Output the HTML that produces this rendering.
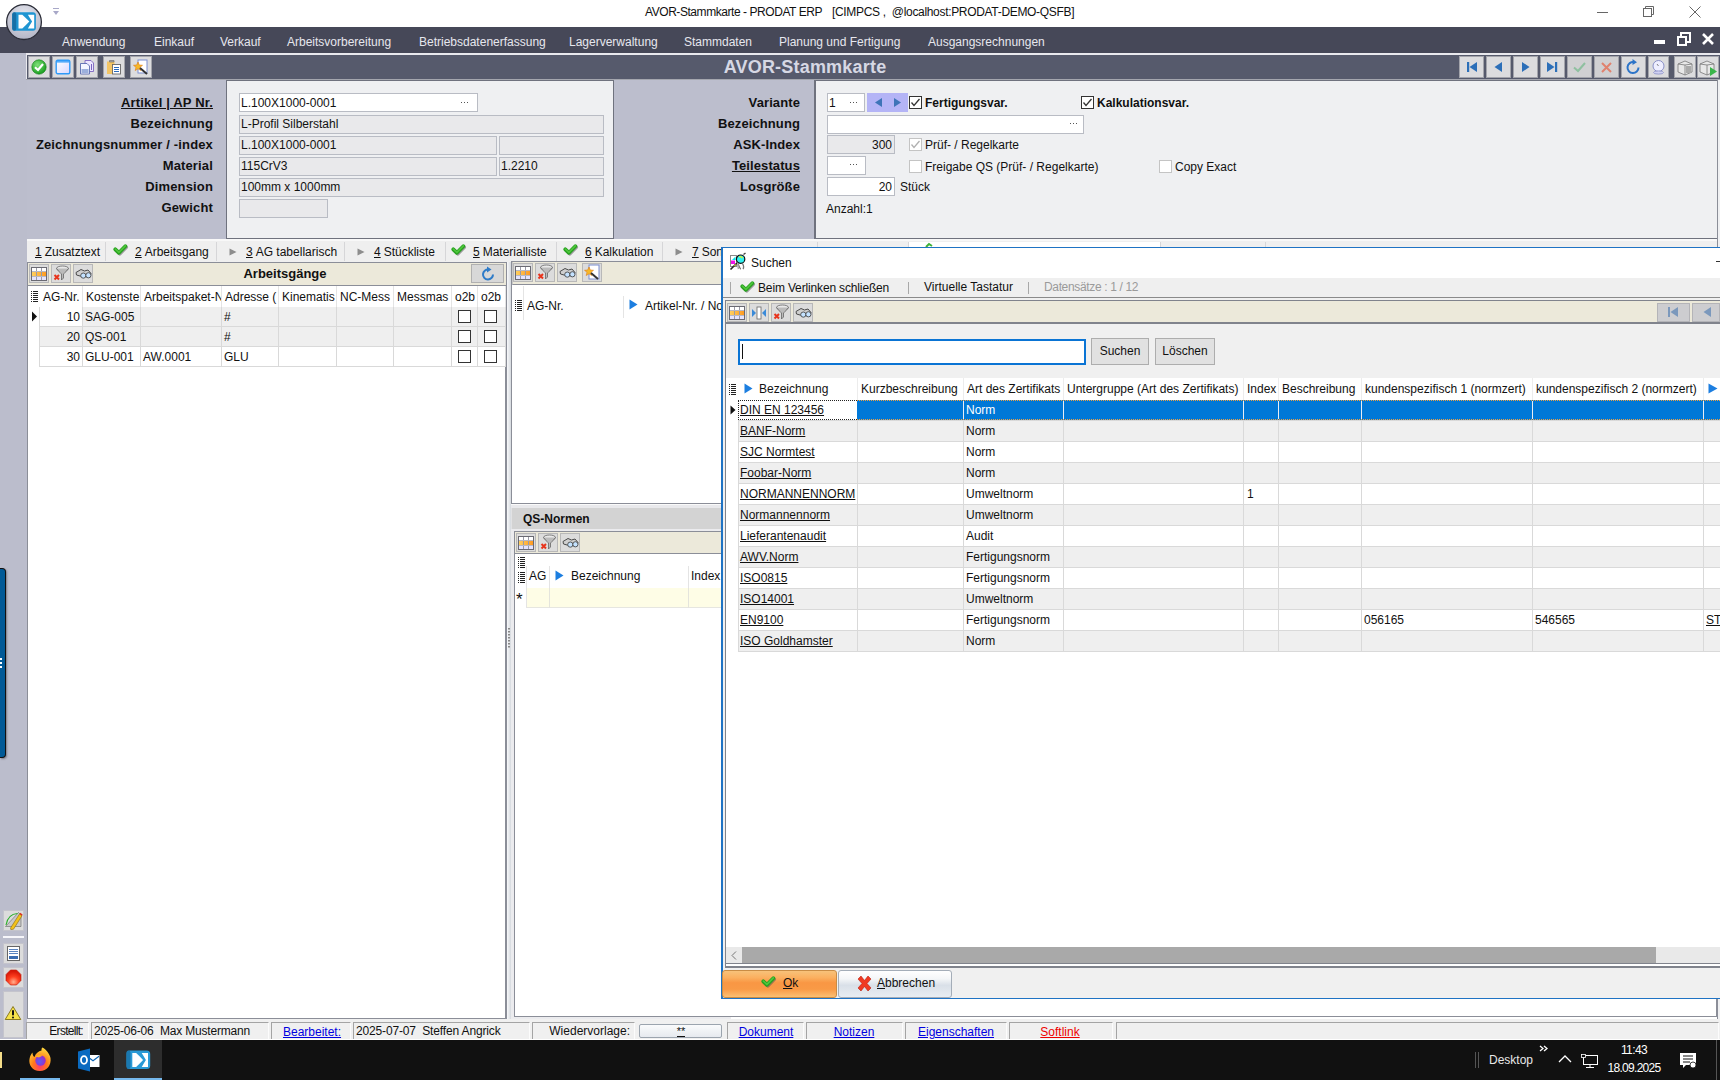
<!DOCTYPE html><html><head><meta charset="utf-8"><title>AVOR-Stammkarte</title><style>
html,body{margin:0;padding:0;width:1720px;height:1080px;overflow:hidden;background:#fff;font-family:"Liberation Sans",sans-serif;}
.a{position:absolute;box-sizing:border-box;}
.t{white-space:nowrap;}
.u{text-decoration:underline;}
</style></head><body>
<div class="a" style="left:0px;top:0px;width:1720px;height:27px;background:#fff"></div>
<svg class="a" style="left:52px;top:8px;" width="8" height="8" viewBox="0 0 8 8"><rect x="1" y="0" width="6" height="1" fill="#a8a8c8"/><path d="M1 3 L7 3 L4 7Z" fill="#a8a8c8"/></svg>
<div class="a t" style="left:645px;top:5px;font-size:12px;line-height:14px;color:#111;letter-spacing:-0.44px">AVOR-Stammkarte - PRODAT ERP</div>
<div class="a t" style="left:832px;top:5px;font-size:12px;line-height:14px;color:#111;letter-spacing:-0.32px">[CIMPCS ,&nbsp; @localhost:PRODAT-DEMO-QSFB]</div>
<div class="a" style="left:1597px;top:12px;width:11px;height:1px;background:#666"></div>
<svg class="a" style="left:1643px;top:6px;" width="12" height="12" viewBox="0 0 12 12"><rect x="0.5" y="2.5" width="8" height="8" fill="none" stroke="#666"/><path d="M2.5 2.5 V0.5 H10.5 V8.5 H8.5" fill="none" stroke="#666"/></svg>
<svg class="a" style="left:1688px;top:5px;" width="14" height="14" viewBox="0 0 14 14"><path d="M1.5 1.5 L12.5 12.5 M12.5 1.5 L1.5 12.5" stroke="#555" stroke-width="0.9"/></svg>
<div class="a" style="left:0px;top:27px;width:1720px;height:26px;background:#464858"></div>
<div class="a t" style="left:62px;top:35px;font-size:12px;line-height:14px;color:#e6e7ee;">Anwendung</div>
<div class="a t" style="left:154px;top:35px;font-size:12px;line-height:14px;color:#e6e7ee;">Einkauf</div>
<div class="a t" style="left:220px;top:35px;font-size:12px;line-height:14px;color:#e6e7ee;">Verkauf</div>
<div class="a t" style="left:287px;top:35px;font-size:12px;line-height:14px;color:#e6e7ee;">Arbeitsvorbereitung</div>
<div class="a t" style="left:419px;top:35px;font-size:12px;line-height:14px;color:#e6e7ee;">Betriebsdatenerfassung</div>
<div class="a t" style="left:569px;top:35px;font-size:12px;line-height:14px;color:#e6e7ee;">Lagerverwaltung</div>
<div class="a t" style="left:684px;top:35px;font-size:12px;line-height:14px;color:#e6e7ee;">Stammdaten</div>
<div class="a t" style="left:779px;top:35px;font-size:12px;line-height:14px;color:#e6e7ee;">Planung und Fertigung</div>
<div class="a t" style="left:928px;top:35px;font-size:12px;line-height:14px;color:#e6e7ee;">Ausgangsrechnungen</div>
<svg class="a" style="left:4px;top:3px;" width="40" height="40" viewBox="0 0 40 40"><defs><radialGradient id="lg" cx="50%" cy="30%" r="70%"><stop offset="0" stop-color="#e6e7ef"/><stop offset="1" stop-color="#b4b6c6"/></radialGradient></defs>
<circle cx="20" cy="19.1" r="17.4" fill="url(#lg)" stroke="#2b2d38" stroke-width="1.3"/>
<rect x="8.2" y="9.2" width="23.7" height="18.5" rx="3" fill="#1f95d2"/>
<rect x="8.2" y="9.2" width="4" height="18.5" rx="2" fill="#176fa6"/>
<path d="M14.5 11.7 L18.3 11.7 Q22 15 25.3 18.6 Q22 22.2 18.3 25.6 L14.5 25.6Z" fill="#fff"/>
<path d="M23.9 11.7 L30.2 11.7 L30.2 25.6 L23.9 25.6 Q26 22 28.1 18.6 Q26 15.2 23.9 11.7Z" fill="#fff"/></svg>
<div class="a" style="left:1654px;top:40px;width:11px;height:4px;background:#fff"></div>
<svg class="a" style="left:1677px;top:32px;" width="14" height="14" viewBox="0 0 14 14"><rect x="1" y="5" width="8" height="8" fill="none" stroke="#fff" stroke-width="2"/><path d="M4 4 V1 H13 V10 H10" fill="none" stroke="#fff" stroke-width="2"/></svg>
<svg class="a" style="left:1701px;top:32px;" width="14" height="14" viewBox="0 0 14 14"><path d="M2 2 L12 12 M12 2 L2 12" stroke="#fff" stroke-width="2.6"/></svg>
<div class="a" style="left:0px;top:53px;width:27px;height:987px;background:#bbbdcc"></div>
<div class="a" style="left:26px;top:53px;width:1694px;height:2px;background:#e9e9ee"></div>
<div class="a" style="left:26px;top:55px;width:1694px;height:25px;background:#565a6c;border-left:1px solid #e9e9ee"></div>
<div class="a" style="left:26px;top:79px;width:1694px;height:1px;background:#a4a6ae"></div>
<div class="a" style="left:28px;top:56px;width:22px;height:22px;background:#dcdcde;border:1px solid #a3a4ab"></div>
<div class="a" style="left:52px;top:56px;width:22px;height:22px;background:#dcdcde;border:1px solid #a3a4ab"></div>
<div class="a" style="left:76px;top:56px;width:22px;height:22px;background:#dcdcde;border:1px solid #a3a4ab"></div>
<div class="a" style="left:103px;top:56px;width:22px;height:22px;background:#dcdcde;border:1px solid #a3a4ab"></div>
<div class="a" style="left:130px;top:56px;width:22px;height:22px;background:#dcdcde;border:1px solid #a3a4ab"></div>
<svg class="a" style="left:31px;top:59px;" width="16" height="16" viewBox="0 0 16 16"><defs><radialGradient id="gc" cx="40%" cy="35%" r="70%"><stop offset="0" stop-color="#7fe07a"/><stop offset="1" stop-color="#139a1a"/></radialGradient></defs><circle cx="8" cy="8" r="7.2" fill="url(#gc)" stroke="#0b7a12" stroke-width="0.6"/><path d="M4 8.3 L7 11 L12 5" fill="none" stroke="#fff" stroke-width="2.2"/></svg>
<svg class="a" style="left:55px;top:59px;" width="16" height="16" viewBox="0 0 16 16"><defs><linearGradient id="wg" x1="0" y1="0" x2="1" y2="1"><stop offset="0" stop-color="#fff"/><stop offset="1" stop-color="#d8d8ff"/></linearGradient></defs><rect x="1.2" y="1.2" width="13.6" height="13.6" rx="1.5" fill="url(#wg)" stroke="#2e9af8" stroke-width="1.4"/><rect x="2" y="2.2" width="12" height="1.3" fill="#2e9af8"/></svg>
<svg class="a" style="left:79px;top:59px;" width="16" height="16" viewBox="0 0 16 16"><path d="M6 1.5 H12 L14.5 4 V12.5 H6Z" fill="#ece6ff" stroke="#7a64c0" stroke-width="0.9"/><rect x="12" y="5" width="1" height="6" fill="#7a64c0"/><path d="M1.5 4.5 H8 L10.5 7 V15 H1.5Z" fill="#f4f6ff" stroke="#5a6cb0" stroke-width="0.9"/><rect x="2.5" y="10" width="7" height="4" fill="#9cb0dc"/></svg>
<svg class="a" style="left:106px;top:59px;" width="16" height="16" viewBox="0 0 16 16"><rect x="1" y="2.5" width="7.5" height="12.5" fill="#f3c565"/><path d="M3.5 3 V1.5 H8 V3Z" fill="#aaa" stroke="#666" stroke-width="0.6"/><rect x="6.5" y="5.5" width="8" height="9.5" fill="#fff" stroke="#666" stroke-width="0.9"/><rect x="8" y="8" width="5" height="1" fill="#2a6bbd"/><rect x="8" y="10" width="5" height="1" fill="#2a6bbd"/><rect x="8" y="12" width="5" height="1" fill="#2a6bbd"/></svg>
<svg class="a" style="left:133px;top:59px;" width="16" height="16" viewBox="0 0 16 16"><rect x="5" y="1" width="9" height="13" fill="#fff" stroke="#7b8ed0" stroke-width="1"/><path d="M5 3 L6.3 6 L9.5 6.3 L7 8.3 L7.8 11.5 L5 9.8 L2.2 11.5 L3 8.3 L0.5 6.3 L3.7 6Z" fill="#f6b928" stroke="#e07a10" stroke-width="0.6"/><path d="M7 9 L14 15" stroke="#333" stroke-width="2"/></svg>
<div class="a t" style="left:505px;width:600px;top:57px;font-size:18px;line-height:20px;font-weight:bold;color:#d6d8e4;text-align:center;letter-spacing:0.2px">AVOR-Stammkarte</div>
<div class="a" style="left:1459px;top:56px;width:25px;height:22px;background:#dcdcde;border:1px solid #a3a4ab"></div>
<div class="a" style="left:1486px;top:56px;width:25px;height:22px;background:#dcdcde;border:1px solid #a3a4ab"></div>
<div class="a" style="left:1513px;top:56px;width:25px;height:22px;background:#dcdcde;border:1px solid #a3a4ab"></div>
<div class="a" style="left:1540px;top:56px;width:25px;height:22px;background:#dcdcde;border:1px solid #a3a4ab"></div>
<div class="a" style="left:1567px;top:56px;width:25px;height:22px;background:#d0d0d2;border:1px solid #a3a4ab"></div>
<div class="a" style="left:1594px;top:56px;width:25px;height:22px;background:#d0d0d2;border:1px solid #a3a4ab"></div>
<div class="a" style="left:1621px;top:56px;width:25px;height:22px;background:#dcdcde;border:1px solid #a3a4ab"></div>
<div class="a" style="left:1648px;top:56px;width:21px;height:22px;background:#dcdcde;border:1px solid #a3a4ab"></div>
<div class="a" style="left:1674px;top:56px;width:22px;height:22px;background:#dcdcde;border:1px solid #a3a4ab"></div>
<div class="a" style="left:1697px;top:56px;width:22px;height:22px;background:#dcdcde;border:1px solid #a3a4ab"></div>
<svg class="a" style="left:1459px;top:56px;" width="25" height="22" viewBox="0 0 25 22"><rect x="8" y="6" width="2.2" height="10" fill="#2c6fb8"/><path d="M18 6 L10.5 11 L18 16Z" fill="#2c6fb8"/></svg>
<svg class="a" style="left:1486px;top:56px;" width="25" height="22" viewBox="0 0 25 22"><path d="M16 6 L8.5 11 L16 16Z" fill="#2c6fb8"/></svg>
<svg class="a" style="left:1513px;top:56px;" width="25" height="22" viewBox="0 0 25 22"><path d="M9 6 L16.5 11 L9 16Z" fill="#2c6fb8"/></svg>
<svg class="a" style="left:1540px;top:56px;" width="25" height="22" viewBox="0 0 25 22"><rect x="15" y="6" width="2.2" height="10" fill="#2c6fb8"/><path d="M7 6 L14.5 11 L7 16Z" fill="#2c6fb8"/></svg>
<svg class="a" style="left:1567px;top:56px;" width="25" height="22" viewBox="0 0 25 22"><path d="M7 11.5 L11 15 L18 7" fill="none" stroke="#8fc0a0" stroke-width="2"/></svg>
<svg class="a" style="left:1594px;top:56px;" width="25" height="22" viewBox="0 0 25 22"><path d="M8 7 L17 16 M17 7 L8 16" stroke="#e0826e" stroke-width="2"/></svg>
<svg class="a" style="left:1621px;top:56px;" width="25" height="22" viewBox="0 0 25 22"><path d="M17.5 11.5 A5.5 5.5 0 1 1 13 6.1" fill="none" stroke="#2c74c8" stroke-width="2"/><path d="M11.5 3 L16 6.3 L11.5 9Z" fill="#2c74c8"/></svg>
<svg class="a" style="left:1646px;top:56px;" width="25" height="22" viewBox="0 0 25 22"><circle cx="12.5" cy="10" r="5.5" fill="#eef" stroke="#8a90c8" stroke-width="1"/><ellipse cx="12.5" cy="16.5" rx="5" ry="1.6" fill="#cfd0f0" stroke="#8a90c8" stroke-width="0.8"/><path d="M12.5 10 L11 8" stroke="#666" stroke-width="0.8"/></svg>
<svg class="a" style="left:1674px;top:56px;" width="22" height="22" viewBox="0 0 22 22"><path d="M4 8 L11 5 L18 8 L18 16 L11 19 L4 16Z" fill="#e8e8e8" stroke="#777" stroke-width="0.8"/><path d="M11 9 L11 19 M4 8 L11 9 L18 8" stroke="#777" stroke-width="0.8" fill="none"/><rect x="12" y="10" width="5" height="7" fill="#aaa"/></svg>
<svg class="a" style="left:1697px;top:56px;" width="22" height="22" viewBox="0 0 22 22"><path d="M3 8 L10 5 L17 8 L17 16 L10 19 L3 16Z" fill="#e8e8e8" stroke="#777" stroke-width="0.8"/><path d="M10 9 L10 19 M3 8 L10 9 L17 8" stroke="#777" stroke-width="0.8" fill="none"/><path d="M13 11 L20 15.5 L13 20Z" fill="#39b54a"/></svg>
<div class="a" style="left:27px;top:80px;width:1693px;height:159px;background:#bcbecd"></div>
<div class="a" style="left:226px;top:80px;width:388px;height:159px;background:#eff0f2;border:1px solid #6f727e;border-bottom:1px solid #6f727e"></div>
<div class="a" style="left:814px;top:80px;width:906px;height:159px;background:#eff0f2;border-left:2px solid #6f727e;border-top:1px solid #6f727e;border-bottom:1px solid #6f727e"></div>
<div class="a t" style="right:1507px;top:95px;font-size:13px;line-height:15px;font-weight:bold;color:#111;text-align:right;text-decoration:underline;letter-spacing:0.15px">Artikel | AP Nr.</div>
<div class="a t" style="right:1507px;top:116px;font-size:13px;line-height:15px;font-weight:bold;color:#111;text-align:right;letter-spacing:0.15px">Bezeichnung</div>
<div class="a t" style="right:1507px;top:137px;font-size:13px;line-height:15px;font-weight:bold;color:#111;text-align:right;letter-spacing:0.15px">Zeichnungsnummer / -index</div>
<div class="a t" style="right:1507px;top:158px;font-size:13px;line-height:15px;font-weight:bold;color:#111;text-align:right;letter-spacing:0.15px">Material</div>
<div class="a t" style="right:1507px;top:179px;font-size:13px;line-height:15px;font-weight:bold;color:#111;text-align:right;letter-spacing:0.15px">Dimension</div>
<div class="a t" style="right:1507px;top:200px;font-size:13px;line-height:15px;font-weight:bold;color:#111;text-align:right;letter-spacing:0.15px">Gewicht</div>
<div class="a" style="left:239px;top:93px;width:239px;height:19px;background:#fff;border:1px solid #b9bcc4"></div>
<div class="a t" style="left:241px;top:96px;font-size:12px;line-height:14px;color:#111;">L.100X1000-0001</div>
<svg class="a" style="left:461px;top:101px;" width="10" height="3" viewBox="0 0 10 3"><rect x="0" y="1" width="1" height="1" fill="#555"/><rect x="3" y="1" width="1" height="1" fill="#555"/><rect x="6" y="1" width="1" height="1" fill="#555"/></svg>
<div class="a" style="left:239px;top:115px;width:365px;height:19px;background:#e9e9eb;border:1px solid #b9bcc4"></div>
<div class="a t" style="left:241px;top:117px;font-size:12px;line-height:14px;color:#111;">L-Profil Silberstahl</div>
<div class="a" style="left:239px;top:136px;width:258px;height:19px;background:#e9e9eb;border:1px solid #b9bcc4"></div>
<div class="a" style="left:499px;top:136px;width:105px;height:19px;background:#e9e9eb;border:1px solid #b9bcc4"></div>
<div class="a t" style="left:241px;top:138px;font-size:12px;line-height:14px;color:#111;">L.100X1000-0001</div>
<div class="a" style="left:239px;top:157px;width:258px;height:19px;background:#e9e9eb;border:1px solid #b9bcc4"></div>
<div class="a" style="left:499px;top:157px;width:105px;height:19px;background:#e9e9eb;border:1px solid #b9bcc4"></div>
<div class="a t" style="left:241px;top:159px;font-size:12px;line-height:14px;color:#111;">115CrV3</div>
<div class="a t" style="left:501px;top:159px;font-size:12px;line-height:14px;color:#111;">1.2210</div>
<div class="a" style="left:239px;top:178px;width:365px;height:19px;background:#e9e9eb;border:1px solid #b9bcc4"></div>
<div class="a t" style="left:241px;top:180px;font-size:12px;line-height:14px;color:#111;">100mm x 1000mm</div>
<div class="a" style="left:239px;top:199px;width:89px;height:19px;background:#e9e9eb;border:1px solid #b9bcc4"></div>
<div class="a t" style="right:920px;top:95px;font-size:13px;line-height:15px;font-weight:bold;color:#111;text-align:right;letter-spacing:0.1px">Variante</div>
<div class="a t" style="right:920px;top:116px;font-size:13px;line-height:15px;font-weight:bold;color:#111;text-align:right;letter-spacing:0.1px">Bezeichnung</div>
<div class="a t" style="right:920px;top:137px;font-size:13px;line-height:15px;font-weight:bold;color:#111;text-align:right;letter-spacing:0.1px">ASK-Index</div>
<div class="a t" style="right:920px;top:158px;font-size:13px;line-height:15px;font-weight:bold;color:#111;text-align:right;text-decoration:underline;letter-spacing:0.1px">Teilestatus</div>
<div class="a t" style="right:920px;top:179px;font-size:13px;line-height:15px;font-weight:bold;color:#111;text-align:right;letter-spacing:0.1px">Losgröße</div>
<div class="a" style="left:827px;top:93px;width:38px;height:19px;background:#fff;border:1px solid #b9bcc4"></div>
<div class="a t" style="left:829px;top:96px;font-size:12px;line-height:14px;color:#111;">1</div>
<svg class="a" style="left:850px;top:101px;" width="10" height="3" viewBox="0 0 10 3"><rect x="0" y="1" width="1" height="1" fill="#555"/><rect x="3" y="1" width="1" height="1" fill="#555"/><rect x="6" y="1" width="1" height="1" fill="#555"/></svg>
<div class="a" style="left:867px;top:93px;width:41px;height:19px;background:#b4b4f6"></div>
<svg class="a" style="left:867px;top:93px;" width="41" height="19" viewBox="0 0 41 19"><path d="M15 5 L8 9.5 L15 14Z" fill="#3e74b8"/><path d="M27 5 L34 9.5 L27 14Z" fill="#3e74b8"/></svg>
<svg class="a" style="left:909px;top:96px;" width="13" height="13" viewBox="0 0 13 13"><rect x="0.5" y="0.5" width="12" height="12" fill="#fff" stroke="#333"/><path d="M2.5 6.5 L5 9.5 L10.5 3" fill="none" stroke="#333" stroke-width="1.3"/></svg>
<div class="a t" style="left:925px;top:96px;font-size:12px;line-height:14px;font-weight:bold;color:#111;">Fertigungsvar.</div>
<svg class="a" style="left:1081px;top:96px;" width="13" height="13" viewBox="0 0 13 13"><rect x="0.5" y="0.5" width="12" height="12" fill="#fff" stroke="#333"/><path d="M2.5 6.5 L5 9.5 L10.5 3" fill="none" stroke="#333" stroke-width="1.3"/></svg>
<div class="a t" style="left:1097px;top:96px;font-size:12px;line-height:14px;font-weight:bold;color:#111;">Kalkulationsvar.</div>
<div class="a" style="left:827px;top:115px;width:257px;height:19px;background:#fff;border:1px solid #b9bcc4"></div>
<svg class="a" style="left:1070px;top:122px;" width="10" height="3" viewBox="0 0 10 3"><rect x="0" y="1" width="1" height="1" fill="#555"/><rect x="3" y="1" width="1" height="1" fill="#555"/><rect x="6" y="1" width="1" height="1" fill="#555"/></svg>
<div class="a" style="left:827px;top:135px;width:68px;height:19px;background:#e9e9eb;border:1px solid #b9bcc4"></div>
<div class="a t" style="right:828px;top:138px;font-size:12px;line-height:14px;color:#111;text-align:right;">300</div>
<svg class="a" style="left:909px;top:138px;" width="13" height="13" viewBox="0 0 13 13"><rect x="0.5" y="0.5" width="12" height="12" fill="#fff" stroke="#c4c4c4"/><path d="M2.5 6.5 L5 9.5 L10.5 3" fill="none" stroke="#b0b0b0" stroke-width="1.3"/></svg>
<div class="a t" style="left:925px;top:138px;font-size:12px;line-height:14px;color:#111;">Prüf- / Regelkarte</div>
<div class="a" style="left:827px;top:156px;width:39px;height:19px;background:#fff;border:1px solid #b9bcc4"></div>
<svg class="a" style="left:850px;top:163px;" width="10" height="3" viewBox="0 0 10 3"><rect x="0" y="1" width="1" height="1" fill="#555"/><rect x="3" y="1" width="1" height="1" fill="#555"/><rect x="6" y="1" width="1" height="1" fill="#555"/></svg>
<svg class="a" style="left:909px;top:160px;" width="13" height="13" viewBox="0 0 13 13"><rect x="0.5" y="0.5" width="12" height="12" fill="#fff" stroke="#c4c4c4"/></svg>
<div class="a t" style="left:925px;top:160px;font-size:12px;line-height:14px;color:#111;">Freigabe QS (Prüf- / Regelkarte)</div>
<svg class="a" style="left:1159px;top:160px;" width="13" height="13" viewBox="0 0 13 13"><rect x="0.5" y="0.5" width="12" height="12" fill="#fff" stroke="#c4c4c4"/></svg>
<div class="a t" style="left:1175px;top:160px;font-size:12px;line-height:14px;color:#111;">Copy Exact</div>
<div class="a" style="left:827px;top:177px;width:68px;height:19px;background:#fff;border:1px solid #b9bcc4"></div>
<div class="a t" style="right:828px;top:180px;font-size:12px;line-height:14px;color:#111;text-align:right;">20</div>
<div class="a t" style="left:900px;top:180px;font-size:12px;line-height:14px;color:#111;">Stück</div>
<div class="a t" style="left:826px;top:202px;font-size:12px;line-height:14px;color:#111;">Anzahl:1</div>
<div class="a" style="left:27px;top:239px;width:1693px;height:24px;background:#efefef;border-top:2px solid #f8f8f8;border-bottom:1px solid #c9c9cc"></div>
<div class="a" style="left:105px;top:242px;width:1px;height:19px;background:#d6d6d8"></div>
<div class="a" style="left:216px;top:242px;width:1px;height:19px;background:#d6d6d8"></div>
<div class="a" style="left:344px;top:242px;width:1px;height:19px;background:#d6d6d8"></div>
<div class="a" style="left:445px;top:242px;width:1px;height:19px;background:#d6d6d8"></div>
<div class="a" style="left:556px;top:242px;width:1px;height:19px;background:#d6d6d8"></div>
<div class="a" style="left:662px;top:242px;width:1px;height:19px;background:#d6d6d8"></div>
<div class="a" style="left:1160px;top:242px;width:1px;height:19px;background:#d6d6d8"></div>
<div class="a" style="left:1265px;top:242px;width:1px;height:19px;background:#d6d6d8"></div>
<div class="a t" style="left:35px;top:245px;font-size:12px;line-height:14px;color:#111;"><span class="u">1</span><span style="margin-left:3px">Zusatztext</span></div>
<svg class="a" style="left:113px;top:243px;" width="17" height="15" viewBox="0 0 17 15"><path d="M3.2 7.3 L6.8 10.8 L13.2 4.2" fill="none" stroke="#555" stroke-opacity="0.55" stroke-width="3.6" stroke-linecap="round" stroke-linejoin="round"/><path d="M2.3 6.3 L5.9 9.8 L12.3 3.2" fill="none" stroke="#27a21f" stroke-width="3.8" stroke-linecap="round" stroke-linejoin="round"/><path d="M2.3 6 L5.9 9.4 L12.3 2.9" fill="none" stroke="#4fc63c" stroke-width="1.6" stroke-linecap="round" stroke-linejoin="round"/></svg>
<div class="a t" style="left:135px;top:245px;font-size:12px;line-height:14px;color:#111;"><span class="u">2</span><span style="margin-left:3px">Arbeitsgang</span></div>
<svg class="a" style="left:229px;top:248px;" width="8" height="8" viewBox="0 0 8 8"><path d="M0.5 0.5 L7.5 4 L0.5 7.5Z" fill="#8d8d8d"/></svg>
<div class="a t" style="left:246px;top:245px;font-size:12px;line-height:14px;color:#111;"><span class="u">3</span><span style="margin-left:3px">AG tabellarisch</span></div>
<svg class="a" style="left:357px;top:248px;" width="8" height="8" viewBox="0 0 8 8"><path d="M0.5 0.5 L7.5 4 L0.5 7.5Z" fill="#8d8d8d"/></svg>
<div class="a t" style="left:374px;top:245px;font-size:12px;line-height:14px;color:#111;"><span class="u">4</span><span style="margin-left:3px">Stückliste</span></div>
<svg class="a" style="left:451px;top:243px;" width="17" height="15" viewBox="0 0 17 15"><path d="M3.2 7.3 L6.8 10.8 L13.2 4.2" fill="none" stroke="#555" stroke-opacity="0.55" stroke-width="3.6" stroke-linecap="round" stroke-linejoin="round"/><path d="M2.3 6.3 L5.9 9.8 L12.3 3.2" fill="none" stroke="#27a21f" stroke-width="3.8" stroke-linecap="round" stroke-linejoin="round"/><path d="M2.3 6 L5.9 9.4 L12.3 2.9" fill="none" stroke="#4fc63c" stroke-width="1.6" stroke-linecap="round" stroke-linejoin="round"/></svg>
<div class="a t" style="left:473px;top:245px;font-size:12px;line-height:14px;color:#111;"><span class="u">5</span><span style="margin-left:3px">Materialliste</span></div>
<svg class="a" style="left:563px;top:243px;" width="17" height="15" viewBox="0 0 17 15"><path d="M3.2 7.3 L6.8 10.8 L13.2 4.2" fill="none" stroke="#555" stroke-opacity="0.55" stroke-width="3.6" stroke-linecap="round" stroke-linejoin="round"/><path d="M2.3 6.3 L5.9 9.8 L12.3 3.2" fill="none" stroke="#27a21f" stroke-width="3.8" stroke-linecap="round" stroke-linejoin="round"/><path d="M2.3 6 L5.9 9.4 L12.3 2.9" fill="none" stroke="#4fc63c" stroke-width="1.6" stroke-linecap="round" stroke-linejoin="round"/></svg>
<div class="a t" style="left:585px;top:245px;font-size:12px;line-height:14px;color:#111;"><span class="u">6</span><span style="margin-left:3px">Kalkulation</span></div>
<svg class="a" style="left:675px;top:248px;" width="8" height="8" viewBox="0 0 8 8"><path d="M0.5 0.5 L7.5 4 L0.5 7.5Z" fill="#8d8d8d"/></svg>
<div class="a t" style="left:692px;top:245px;font-size:12px;line-height:14px;color:#111;"><span class="u">7</span><span style="margin-left:3px">Sonderbearbeitung</span></div>
<div class="a" style="left:27px;top:262px;width:480px;height:757px;background:#fff;border:1px solid #8b8e98;border-width:1px 2px 1px 1px"></div>
<div class="a" style="left:28px;top:263px;width:478px;height:23px;background:#ece9da;border-bottom:1px solid #8b8e98"></div>
<div class="a" style="left:29px;top:264px;width:20px;height:19px;background:#dcdcdc;border:1px solid #b8b8b8"></div>
<div class="a" style="left:51px;top:264px;width:20px;height:19px;background:#dcdcdc;border:1px solid #b8b8b8"></div>
<div class="a" style="left:73px;top:264px;width:20px;height:19px;background:#dcdcdc;border:1px solid #b8b8b8"></div>
<svg class="a" style="left:31px;top:267px;" width="16" height="14" viewBox="0 0 16 14"><defs><linearGradient id="og" x1="0" x2="1"><stop offset="0" stop-color="#ffd060"/><stop offset="1" stop-color="#ff9a20"/></linearGradient></defs><rect x="0.5" y="0.5" width="15" height="13" fill="#fff" stroke="#6a6a72"/><rect x="1" y="9" width="14" height="4" fill="#e4e4ff"/><rect x="1" y="4.5" width="14" height="4.5" fill="url(#og)"/><rect x="5" y="1" width="1" height="12" fill="#9a9aa6"/><rect x="10" y="1" width="1" height="12" fill="#9a9aa6"/><rect x="1" y="4" width="14" height="1" fill="#b8b8c4"/><rect x="1" y="9" width="14" height="1" fill="#b8b8c4"/></svg>
<svg class="a" style="left:53px;top:265px;" width="16" height="16" viewBox="0 0 16 16"><ellipse cx="9.5" cy="3.5" rx="6" ry="2.5" fill="#e8e8e8" stroke="#666" stroke-width="0.8"/><path d="M3.5 3.5 Q8 9 8.5 9 L8.5 15 L10.5 13 L10.5 9 Q11 9 15.5 3.5" fill="#bbb" stroke="#666" stroke-width="0.8"/><path d="M1.5 10 L6 14.5 M6 10 L1.5 14.5" stroke="#e8341c" stroke-width="2"/></svg>
<svg class="a" style="left:75px;top:267px;" width="17" height="14" viewBox="0 0 17 14"><path d="M1 5.5 L6 2.5 L9.5 4 L13 3 L16 6.5 L15 10 L5 9 L1.5 8Z" fill="#cfcfcf" stroke="#4a4a4a" stroke-width="1" stroke-linejoin="round"/><circle cx="8.3" cy="8.6" r="2.6" fill="#c4e2ff" stroke="#4a4a4a" stroke-width="0.9"/><circle cx="13.4" cy="8.3" r="2.6" fill="#c4e2ff" stroke="#4a4a4a" stroke-width="0.9"/></svg>
<div class="a t" style="left:-15px;width:600px;top:266px;font-size:13px;line-height:15px;font-weight:bold;color:#111;text-align:center;">Arbeitsgänge</div>
<div class="a" style="left:471px;top:264px;width:33px;height:19px;background:#d8d8d8;border:1px solid #b0b0b0"></div>
<svg class="a" style="left:480px;top:266px;" width="16" height="16" viewBox="0 0 16 16"><path d="M13 8.5 A5 5 0 1 1 8.5 3.5" fill="none" stroke="#2e7bc8" stroke-width="2"/><path d="M7 0.5 L11.5 3.5 L7 6.5Z" fill="#2e7bc8"/></svg>
<svg class="a" style="left:31px;top:291px;" width="8" height="11" viewBox="0 0 8 11"><rect x="0" y="0" width="1" height="1" fill="#222"/><rect x="2" y="0" width="5" height="1" fill="#222"/><rect x="0" y="2" width="1" height="1" fill="#222"/><rect x="2" y="2" width="5" height="1" fill="#222"/><rect x="0" y="4" width="1" height="1" fill="#222"/><rect x="2" y="4" width="5" height="1" fill="#222"/><rect x="0" y="6" width="1" height="1" fill="#222"/><rect x="2" y="6" width="5" height="1" fill="#222"/><rect x="0" y="8" width="1" height="1" fill="#222"/><rect x="2" y="8" width="5" height="1" fill="#222"/><rect x="0" y="10" width="1" height="1" fill="#222"/><rect x="2" y="10" width="5" height="1" fill="#222"/></svg>
<div class="a" style="left:39px;top:286px;width:43px;height:21px;overflow:hidden"><div class="t" style="position:absolute;left:4px;top:4px;font-size:12px;line-height:14px;color:#111">AG-Nr.</div></div>
<div class="a" style="left:82px;top:286px;width:1px;height:21px;background:#e4e4e4"></div>
<div class="a" style="left:82px;top:286px;width:58px;height:21px;overflow:hidden"><div class="t" style="position:absolute;left:4px;top:4px;font-size:12px;line-height:14px;color:#111">Kostenste</div></div>
<div class="a" style="left:140px;top:286px;width:1px;height:21px;background:#e4e4e4"></div>
<div class="a" style="left:140px;top:286px;width:81px;height:21px;overflow:hidden"><div class="t" style="position:absolute;left:4px;top:4px;font-size:12px;line-height:14px;color:#111">Arbeitspaket-N</div></div>
<div class="a" style="left:221px;top:286px;width:1px;height:21px;background:#e4e4e4"></div>
<div class="a" style="left:221px;top:286px;width:57px;height:21px;overflow:hidden"><div class="t" style="position:absolute;left:4px;top:4px;font-size:12px;line-height:14px;color:#111">Adresse (</div></div>
<div class="a" style="left:278px;top:286px;width:1px;height:21px;background:#e4e4e4"></div>
<div class="a" style="left:278px;top:286px;width:58px;height:21px;overflow:hidden"><div class="t" style="position:absolute;left:4px;top:4px;font-size:12px;line-height:14px;color:#111">Kinematis</div></div>
<div class="a" style="left:336px;top:286px;width:1px;height:21px;background:#e4e4e4"></div>
<div class="a" style="left:336px;top:286px;width:57px;height:21px;overflow:hidden"><div class="t" style="position:absolute;left:4px;top:4px;font-size:12px;line-height:14px;color:#111">NC-Mess</div></div>
<div class="a" style="left:393px;top:286px;width:1px;height:21px;background:#e4e4e4"></div>
<div class="a" style="left:393px;top:286px;width:58px;height:21px;overflow:hidden"><div class="t" style="position:absolute;left:4px;top:4px;font-size:12px;line-height:14px;color:#111">Messmas</div></div>
<div class="a" style="left:451px;top:286px;width:1px;height:21px;background:#e4e4e4"></div>
<div class="a" style="left:451px;top:286px;width:26px;height:21px;overflow:hidden"><div class="t" style="position:absolute;left:4px;top:4px;font-size:12px;line-height:14px;color:#111">o2b</div></div>
<div class="a" style="left:477px;top:286px;width:1px;height:21px;background:#e4e4e4"></div>
<div class="a" style="left:477px;top:286px;width:28px;height:21px;overflow:hidden"><div class="t" style="position:absolute;left:4px;top:4px;font-size:12px;line-height:14px;color:#111">o2b</div></div>
<div class="a" style="left:505px;top:286px;width:1px;height:21px;background:#e4e4e4"></div>
<div class="a" style="left:39px;top:307px;width:466px;height:20px;background:#efefef"></div>
<div class="a" style="left:39px;top:307px;width:43px;height:20px;background:#fff"></div>
<div class="a" style="left:82px;top:307px;width:1px;height:20px;background:#d9d9d9"></div>
<div class="a" style="left:140px;top:307px;width:1px;height:20px;background:#d9d9d9"></div>
<div class="a" style="left:221px;top:307px;width:1px;height:20px;background:#d9d9d9"></div>
<div class="a" style="left:278px;top:307px;width:1px;height:20px;background:#d9d9d9"></div>
<div class="a" style="left:336px;top:307px;width:1px;height:20px;background:#d9d9d9"></div>
<div class="a" style="left:393px;top:307px;width:1px;height:20px;background:#d9d9d9"></div>
<div class="a" style="left:451px;top:307px;width:1px;height:20px;background:#d9d9d9"></div>
<div class="a" style="left:477px;top:307px;width:1px;height:20px;background:#d9d9d9"></div>
<div class="a" style="left:505px;top:307px;width:1px;height:20px;background:#d9d9d9"></div>
<div class="a" style="left:39px;top:326px;width:466px;height:1px;background:#d9d9d9"></div>
<div class="a t" style="right:1640px;top:310px;font-size:12px;line-height:14px;color:#111;text-align:right;">10</div>
<div class="a t" style="left:85px;top:310px;font-size:12px;line-height:14px;color:#111;">SAG-005</div>
<div class="a t" style="left:143px;top:310px;font-size:12px;line-height:14px;color:#111;"></div>
<div class="a t" style="left:224px;top:310px;font-size:12px;line-height:14px;color:#111;">#</div>
<svg class="a" style="left:458px;top:310px;" width="13" height="13" viewBox="0 0 13 13"><rect x="0.5" y="0.5" width="12" height="12" fill="#fff" stroke="#333"/></svg>
<svg class="a" style="left:484px;top:310px;" width="13" height="13" viewBox="0 0 13 13"><rect x="0.5" y="0.5" width="12" height="12" fill="#fff" stroke="#333"/></svg>
<div class="a" style="left:39px;top:327px;width:466px;height:20px;background:#efefef"></div>
<div class="a" style="left:82px;top:327px;width:1px;height:20px;background:#d9d9d9"></div>
<div class="a" style="left:140px;top:327px;width:1px;height:20px;background:#d9d9d9"></div>
<div class="a" style="left:221px;top:327px;width:1px;height:20px;background:#d9d9d9"></div>
<div class="a" style="left:278px;top:327px;width:1px;height:20px;background:#d9d9d9"></div>
<div class="a" style="left:336px;top:327px;width:1px;height:20px;background:#d9d9d9"></div>
<div class="a" style="left:393px;top:327px;width:1px;height:20px;background:#d9d9d9"></div>
<div class="a" style="left:451px;top:327px;width:1px;height:20px;background:#d9d9d9"></div>
<div class="a" style="left:477px;top:327px;width:1px;height:20px;background:#d9d9d9"></div>
<div class="a" style="left:505px;top:327px;width:1px;height:20px;background:#d9d9d9"></div>
<div class="a" style="left:39px;top:346px;width:466px;height:1px;background:#d9d9d9"></div>
<div class="a t" style="right:1640px;top:330px;font-size:12px;line-height:14px;color:#111;text-align:right;">20</div>
<div class="a t" style="left:85px;top:330px;font-size:12px;line-height:14px;color:#111;">QS-001</div>
<div class="a t" style="left:143px;top:330px;font-size:12px;line-height:14px;color:#111;"></div>
<div class="a t" style="left:224px;top:330px;font-size:12px;line-height:14px;color:#111;">#</div>
<svg class="a" style="left:458px;top:330px;" width="13" height="13" viewBox="0 0 13 13"><rect x="0.5" y="0.5" width="12" height="12" fill="#fff" stroke="#333"/></svg>
<svg class="a" style="left:484px;top:330px;" width="13" height="13" viewBox="0 0 13 13"><rect x="0.5" y="0.5" width="12" height="12" fill="#fff" stroke="#333"/></svg>
<div class="a" style="left:39px;top:347px;width:466px;height:20px;background:#fff"></div>
<div class="a" style="left:82px;top:347px;width:1px;height:20px;background:#d9d9d9"></div>
<div class="a" style="left:140px;top:347px;width:1px;height:20px;background:#d9d9d9"></div>
<div class="a" style="left:221px;top:347px;width:1px;height:20px;background:#d9d9d9"></div>
<div class="a" style="left:278px;top:347px;width:1px;height:20px;background:#d9d9d9"></div>
<div class="a" style="left:336px;top:347px;width:1px;height:20px;background:#d9d9d9"></div>
<div class="a" style="left:393px;top:347px;width:1px;height:20px;background:#d9d9d9"></div>
<div class="a" style="left:451px;top:347px;width:1px;height:20px;background:#d9d9d9"></div>
<div class="a" style="left:477px;top:347px;width:1px;height:20px;background:#d9d9d9"></div>
<div class="a" style="left:505px;top:347px;width:1px;height:20px;background:#d9d9d9"></div>
<div class="a" style="left:39px;top:366px;width:466px;height:1px;background:#d9d9d9"></div>
<div class="a t" style="right:1640px;top:350px;font-size:12px;line-height:14px;color:#111;text-align:right;">30</div>
<div class="a t" style="left:85px;top:350px;font-size:12px;line-height:14px;color:#111;">GLU-001</div>
<div class="a t" style="left:143px;top:350px;font-size:12px;line-height:14px;color:#111;">AW.0001</div>
<div class="a t" style="left:224px;top:350px;font-size:12px;line-height:14px;color:#111;">GLU</div>
<svg class="a" style="left:458px;top:350px;" width="13" height="13" viewBox="0 0 13 13"><rect x="0.5" y="0.5" width="12" height="12" fill="#fff" stroke="#333"/></svg>
<svg class="a" style="left:484px;top:350px;" width="13" height="13" viewBox="0 0 13 13"><rect x="0.5" y="0.5" width="12" height="12" fill="#fff" stroke="#333"/></svg>
<div class="a" style="left:39px;top:307px;width:1px;height:60px;background:#d9d9d9"></div>
<svg class="a" style="left:31px;top:311px;" width="7" height="11" viewBox="0 0 7 11"><path d="M1 0.5 L6 5.5 L1 10.5Z" fill="#111"/></svg>
<div class="a" style="left:507px;top:262px;width:4px;height:758px;background:linear-gradient(90deg,#f8f9fb,#d5d9de)"></div>
<svg class="a" style="left:507px;top:628px;" width="4" height="22" viewBox="0 0 4 22"><rect x="1" y="0" width="2" height="1.5" fill="#888"/><rect x="1" y="3" width="2" height="1.5" fill="#888"/><rect x="1" y="6" width="2" height="1.5" fill="#888"/><rect x="1" y="9" width="2" height="1.5" fill="#888"/><rect x="1" y="12" width="2" height="1.5" fill="#888"/><rect x="1" y="15" width="2" height="1.5" fill="#888"/><rect x="1" y="18" width="2" height="1.5" fill="#888"/></svg>
<div class="a" style="left:511px;top:261px;width:220px;height:243px;background:#fff;border:1px solid #8b8e98;border-width:1px 0 1px 1px"></div>
<div class="a" style="left:512px;top:262px;width:219px;height:23px;background:#ece9da;border-bottom:1px solid #8b8e98;border-left:1px solid #c8c8c8"></div>
<div class="a" style="left:513px;top:263px;width:20px;height:19px;background:#dcdcdc;border:1px solid #b8b8b8"></div>
<div class="a" style="left:535px;top:263px;width:20px;height:19px;background:#dcdcdc;border:1px solid #b8b8b8"></div>
<div class="a" style="left:557px;top:263px;width:20px;height:19px;background:#dcdcdc;border:1px solid #b8b8b8"></div>
<div class="a" style="left:582px;top:263px;width:20px;height:19px;background:#dcdcdc;border:1px solid #b8b8b8"></div>
<svg class="a" style="left:515px;top:266px;" width="16" height="14" viewBox="0 0 16 14"><defs><linearGradient id="og" x1="0" x2="1"><stop offset="0" stop-color="#ffd060"/><stop offset="1" stop-color="#ff9a20"/></linearGradient></defs><rect x="0.5" y="0.5" width="15" height="13" fill="#fff" stroke="#6a6a72"/><rect x="1" y="9" width="14" height="4" fill="#e4e4ff"/><rect x="1" y="4.5" width="14" height="4.5" fill="url(#og)"/><rect x="5" y="1" width="1" height="12" fill="#9a9aa6"/><rect x="10" y="1" width="1" height="12" fill="#9a9aa6"/><rect x="1" y="4" width="14" height="1" fill="#b8b8c4"/><rect x="1" y="9" width="14" height="1" fill="#b8b8c4"/></svg>
<svg class="a" style="left:537px;top:264px;" width="16" height="16" viewBox="0 0 16 16"><ellipse cx="9.5" cy="3.5" rx="6" ry="2.5" fill="#e8e8e8" stroke="#666" stroke-width="0.8"/><path d="M3.5 3.5 Q8 9 8.5 9 L8.5 15 L10.5 13 L10.5 9 Q11 9 15.5 3.5" fill="#bbb" stroke="#666" stroke-width="0.8"/><path d="M1.5 10 L6 14.5 M6 10 L1.5 14.5" stroke="#e8341c" stroke-width="2"/></svg>
<svg class="a" style="left:559px;top:266px;" width="17" height="14" viewBox="0 0 17 14"><path d="M1 5.5 L6 2.5 L9.5 4 L13 3 L16 6.5 L15 10 L5 9 L1.5 8Z" fill="#cfcfcf" stroke="#4a4a4a" stroke-width="1" stroke-linejoin="round"/><circle cx="8.3" cy="8.6" r="2.6" fill="#c4e2ff" stroke="#4a4a4a" stroke-width="0.9"/><circle cx="13.4" cy="8.3" r="2.6" fill="#c4e2ff" stroke="#4a4a4a" stroke-width="0.9"/></svg>
<svg class="a" style="left:584px;top:264px;" width="16" height="16" viewBox="0 0 16 16"><rect x="5" y="1" width="10" height="14" fill="#fff" stroke="#7b8ed0" stroke-width="1"/><path d="M5 3 L6.3 6 L9.5 6.3 L7 8.3 L7.8 11.5 L5 9.8 L2.2 11.5 L3 8.3 L0.5 6.3 L3.7 6Z" fill="#f6b928" stroke="#e07a10" stroke-width="0.6"/><path d="M7 9 L14 15" stroke="#333" stroke-width="2"/></svg>
<svg class="a" style="left:515px;top:300px;" width="8" height="11" viewBox="0 0 8 11"><rect x="0" y="0" width="1" height="1" fill="#222"/><rect x="2" y="0" width="5" height="1" fill="#222"/><rect x="0" y="2" width="1" height="1" fill="#222"/><rect x="2" y="2" width="5" height="1" fill="#222"/><rect x="0" y="4" width="1" height="1" fill="#222"/><rect x="2" y="4" width="5" height="1" fill="#222"/><rect x="0" y="6" width="1" height="1" fill="#222"/><rect x="2" y="6" width="5" height="1" fill="#222"/><rect x="0" y="8" width="1" height="1" fill="#222"/><rect x="2" y="8" width="5" height="1" fill="#222"/><rect x="0" y="10" width="1" height="1" fill="#222"/><rect x="2" y="10" width="5" height="1" fill="#222"/></svg>
<div class="a" style="left:523px;top:286px;width:1px;height:34px;background:#e4e4e4"></div>
<div class="a" style="left:623px;top:296px;width:1px;height:22px;background:#e4e4e4"></div>
<div class="a t" style="left:527px;top:299px;font-size:12px;line-height:14px;color:#111;">AG-Nr.</div>
<svg class="a" style="left:629px;top:299px;" width="9" height="11" viewBox="0 0 9 11"><path d="M0.5 0.5 L8.5 5.5 L0.5 10.5Z" fill="#1c7ee0"/></svg>
<div class="a t" style="left:645px;top:299px;font-size:12px;line-height:14px;color:#111;">Artikel-Nr. / Normbezeichnung</div>
<div class="a" style="left:511px;top:504px;width:220px;height:4px;background:#e9e9ec;border-top:1px solid #fafafa"></div>
<div class="a" style="left:511px;top:508px;width:220px;height:21px;background:#d3d3d3;border-left:1px solid #e2e2e4"></div>
<div class="a t" style="left:523px;top:512px;font-size:12px;line-height:15px;font-weight:bold;color:#111;">QS-Normen</div>
<div class="a" style="left:511px;top:529px;width:220px;height:491px;background:#ebebee"></div>
<div class="a" style="left:514px;top:531px;width:217px;height:486px;background:#fff;border:1px solid #8b8e98;border-width:1px 0 1px 1px"></div>
<div class="a" style="left:515px;top:532px;width:216px;height:22px;background:#ece9da;border-bottom:1px solid #8b8e98"></div>
<div class="a" style="left:516px;top:533px;width:20px;height:19px;background:#dcdcdc;border:1px solid #b8b8b8"></div>
<div class="a" style="left:538px;top:533px;width:20px;height:19px;background:#dcdcdc;border:1px solid #b8b8b8"></div>
<div class="a" style="left:560px;top:533px;width:20px;height:19px;background:#dcdcdc;border:1px solid #b8b8b8"></div>
<svg class="a" style="left:518px;top:536px;" width="16" height="14" viewBox="0 0 16 14"><defs><linearGradient id="og" x1="0" x2="1"><stop offset="0" stop-color="#ffd060"/><stop offset="1" stop-color="#ff9a20"/></linearGradient></defs><rect x="0.5" y="0.5" width="15" height="13" fill="#fff" stroke="#6a6a72"/><rect x="1" y="9" width="14" height="4" fill="#e4e4ff"/><rect x="1" y="4.5" width="14" height="4.5" fill="url(#og)"/><rect x="5" y="1" width="1" height="12" fill="#9a9aa6"/><rect x="10" y="1" width="1" height="12" fill="#9a9aa6"/><rect x="1" y="4" width="14" height="1" fill="#b8b8c4"/><rect x="1" y="9" width="14" height="1" fill="#b8b8c4"/></svg>
<svg class="a" style="left:540px;top:534px;" width="16" height="16" viewBox="0 0 16 16"><ellipse cx="9.5" cy="3.5" rx="6" ry="2.5" fill="#e8e8e8" stroke="#666" stroke-width="0.8"/><path d="M3.5 3.5 Q8 9 8.5 9 L8.5 15 L10.5 13 L10.5 9 Q11 9 15.5 3.5" fill="#bbb" stroke="#666" stroke-width="0.8"/><path d="M1.5 10 L6 14.5 M6 10 L1.5 14.5" stroke="#e8341c" stroke-width="2"/></svg>
<svg class="a" style="left:562px;top:536px;" width="17" height="14" viewBox="0 0 17 14"><path d="M1 5.5 L6 2.5 L9.5 4 L13 3 L16 6.5 L15 10 L5 9 L1.5 8Z" fill="#cfcfcf" stroke="#4a4a4a" stroke-width="1" stroke-linejoin="round"/><circle cx="8.3" cy="8.6" r="2.6" fill="#c4e2ff" stroke="#4a4a4a" stroke-width="0.9"/><circle cx="13.4" cy="8.3" r="2.6" fill="#c4e2ff" stroke="#4a4a4a" stroke-width="0.9"/></svg>
<svg class="a" style="left:518px;top:557px;" width="8" height="11" viewBox="0 0 8 11"><rect x="0" y="0" width="1" height="1" fill="#222"/><rect x="2" y="0" width="5" height="1" fill="#222"/><rect x="0" y="2" width="1" height="1" fill="#222"/><rect x="2" y="2" width="5" height="1" fill="#222"/><rect x="0" y="4" width="1" height="1" fill="#222"/><rect x="2" y="4" width="5" height="1" fill="#222"/><rect x="0" y="6" width="1" height="1" fill="#222"/><rect x="2" y="6" width="5" height="1" fill="#222"/><rect x="0" y="8" width="1" height="1" fill="#222"/><rect x="2" y="8" width="5" height="1" fill="#222"/><rect x="0" y="10" width="1" height="1" fill="#222"/><rect x="2" y="10" width="5" height="1" fill="#222"/></svg>
<svg class="a" style="left:518px;top:572px;" width="8" height="11" viewBox="0 0 8 11"><rect x="0" y="0" width="1" height="1" fill="#222"/><rect x="2" y="0" width="5" height="1" fill="#222"/><rect x="0" y="2" width="1" height="1" fill="#222"/><rect x="2" y="2" width="5" height="1" fill="#222"/><rect x="0" y="4" width="1" height="1" fill="#222"/><rect x="2" y="4" width="5" height="1" fill="#222"/><rect x="0" y="6" width="1" height="1" fill="#222"/><rect x="2" y="6" width="5" height="1" fill="#222"/><rect x="0" y="8" width="1" height="1" fill="#222"/><rect x="2" y="8" width="5" height="1" fill="#222"/><rect x="0" y="10" width="1" height="1" fill="#222"/><rect x="2" y="10" width="5" height="1" fill="#222"/></svg>
<div class="a" style="left:526px;top:566px;width:1px;height:42px;background:#e4e4e4"></div>
<div class="a" style="left:549px;top:566px;width:1px;height:42px;background:#e4e4e4"></div>
<div class="a" style="left:688px;top:566px;width:1px;height:42px;background:#e4e4e4"></div>
<div class="a t" style="left:529px;top:569px;font-size:12px;line-height:14px;color:#111;">AG</div>
<svg class="a" style="left:555px;top:570px;" width="9" height="11" viewBox="0 0 9 11"><path d="M0.5 0.5 L8.5 5.5 L0.5 10.5Z" fill="#1c7ee0"/></svg>
<div class="a t" style="left:571px;top:569px;font-size:12px;line-height:14px;color:#111;">Bezeichnung</div>
<div class="a t" style="left:691px;top:569px;font-size:12px;line-height:14px;color:#111;">Index</div>
<div class="a" style="left:527px;top:588px;width:204px;height:20px;background:#fefde6;border-bottom:1px solid #e6e6e0"></div>
<div class="a" style="left:549px;top:588px;width:1px;height:20px;background:#e4e4dc"></div>
<div class="a" style="left:688px;top:588px;width:1px;height:20px;background:#e4e4dc"></div>
<div class="a t" style="left:516px;top:590px;font-size:17px;line-height:19px;color:#111;">*</div>
<div class="a" style="left:0px;top:568px;width:6px;height:190px;background:#015a96;border:1px solid #111;border-left:none;border-radius:0 4px 4px 0;box-shadow:1px 1px 2px rgba(0,0,0,0.35)"></div>
<div class="a" style="left:0px;top:658px;width:2px;height:2px;background:#fff"></div>
<div class="a" style="left:0px;top:662px;width:2px;height:2px;background:#fff"></div>
<div class="a" style="left:0px;top:666px;width:2px;height:2px;background:#fff"></div>
<div class="a" style="left:3px;top:910px;width:21px;height:21px;background:#dcdcdc;border:1px solid #c4c4cc"></div>
<svg class="a" style="left:4px;top:911px;" width="19" height="19" viewBox="0 0 19 19"><path d="M1.5 15.5 L14.5 1.5 L17 4 L17 15.5Z" fill="#c8c8c8" stroke="#666" stroke-width="0.6"/><path d="M2 14 Q4 3 13.5 2.5" fill="none" stroke="#28b028" stroke-width="1.1"/><path d="M6.5 17 L15.5 3 L18 4.8 L9.5 18.2 L6.8 18.6Z" fill="#f2c21c" stroke="#8a6a10" stroke-width="0.6"/><path d="M15.5 3 L16.3 1.8 L18.6 3.4 L18 4.8Z" fill="#e03020"/></svg>
<div class="a" style="left:3px;top:936px;width:21px;height:2px;background:#f6f6fa"></div>
<div class="a" style="left:3px;top:943px;width:21px;height:21px;background:#dcdcdc;border:1px solid #c4c4cc"></div>
<svg class="a" style="left:7px;top:946px;" width="13" height="15" viewBox="0 0 13 15"><rect x="0.5" y="0.5" width="12" height="14" fill="#fff" stroke="#666"/><rect x="2" y="3" width="9" height="1" fill="#5a84c0"/><rect x="2" y="5" width="9" height="1" fill="#5a84c0"/><rect x="2" y="7" width="9" height="1" fill="#5a84c0"/><rect x="2" y="10" width="9" height="3" fill="#3a6cb0"/></svg>
<div class="a" style="left:3px;top:967px;width:21px;height:21px;background:#dcdcdc;border:1px solid #c4c4cc"></div>
<svg class="a" style="left:5px;top:969px;" width="17" height="17" viewBox="0 0 17 17"><defs><radialGradient id="st" cx="50%" cy="80%" r="70%"><stop offset="0" stop-color="#ffb090"/><stop offset="0.5" stop-color="#ff4020"/><stop offset="1" stop-color="#d81808"/></radialGradient></defs><path d="M5.5 1 H11.5 L16 5.5 V11.5 L11.5 16 H5.5 L1 11.5 V5.5Z" fill="url(#st)" stroke="#c01808" stroke-width="0.6"/></svg>
<div class="a" style="left:3px;top:991px;width:21px;height:47px;background:#dcdcdc;border:1px solid #c4c4cc"></div>
<svg class="a" style="left:4px;top:1005px;" width="18" height="16" viewBox="0 0 18 16"><path d="M9 1.5 L16.8 14.5 L1.2 14.5Z" fill="#f7e34a" stroke="#8a7a20" stroke-width="1" stroke-linejoin="round"/><rect x="8" y="5" width="2" height="5.5" rx="1" fill="#111"/><rect x="8" y="11.5" width="2" height="2" rx="1" fill="#111"/></svg>
<div class="a" style="left:731px;top:262px;width:989px;height:243px;background:#fff"></div>
<div class="a" style="left:731px;top:999px;width:986px;height:18px;background:#fff;border-right:1px solid #8b8e98;border-bottom:1px solid #8b8e98"></div>
<div class="a" style="left:731px;top:239px;width:989px;height:9px;background:#efefef;border-top:2px solid #f8f8f8"></div>
<div class="a" style="left:817px;top:242px;width:1px;height:6px;background:#d6d6d8"></div>
<div class="a" style="left:908px;top:242px;width:1px;height:6px;background:#d6d6d8"></div>
<div class="a" style="left:1160px;top:242px;width:1px;height:6px;background:#d6d6d8"></div>
<div class="a" style="left:1265px;top:242px;width:1px;height:6px;background:#d6d6d8"></div>
<div class="a" style="left:909px;top:242px;width:251px;height:6px;background:#fff"></div>
<svg class="a" style="left:925px;top:242px;" width="10" height="6" viewBox="0 0 10 6"><path d="M1 5 L4 2 L7 4" stroke="#3fb23a" stroke-width="2" fill="none"/></svg>
<div class="a" style="left:1717px;top:80px;width:3px;height:940px;background:#eff0f2;border-left:1px solid #8b8e98"></div>
<div class="a" style="left:721px;top:247px;width:999px;height:752px;background:#f0f0f0;border:1px solid #1f73c4;border-width:1px 0 1px 2px"></div>
<div class="a" style="left:723px;top:248px;width:997px;height:30px;background:#fff"></div>
<svg class="a" style="left:724px;top:250px;" width="24" height="22" viewBox="0 0 24 22"><rect x="6.5" y="5.5" width="6" height="11" fill="#fff" stroke="#8a8a8a"/><path d="M8 10 L11.5 6.5 L11.5 10Z" fill="#00e8f0"/><rect x="7" y="10.5" width="4" height="3.5" fill="#f010e8"/><path d="M14 13.5 Q16 19 17 19 M18.5 13.5 Q20.5 17 19 19" fill="none" stroke="#777" stroke-width="1.3"/><path d="M13.5 14 L14.5 19" stroke="#aaa" stroke-width="1.5"/><circle cx="16.6" cy="9.2" r="4.2" fill="#30f0f0" stroke="#111" stroke-width="1.2"/><path d="M15 7 Q17 6 18.5 8" stroke="#f0f020" stroke-width="1.3" fill="none"/><path d="M6.5 19.5 L13 13" stroke="#222" stroke-width="1.6"/><path d="M10 16.2 L12 14.2" stroke="#e0d020" stroke-width="1"/><path d="M19.5 4.5 L21.5 3" stroke="#444" stroke-width="1.4"/></svg>
<div class="a t" style="left:751px;top:256px;font-size:12px;line-height:14px;color:#111;">Suchen</div>
<div class="a" style="left:1716px;top:261px;width:4px;height:1px;background:#333"></div>
<div class="a" style="left:723px;top:278px;width:997px;height:20px;background:#efefef;border-bottom:1px solid #8a8a8a"></div>
<div class="a" style="left:730px;top:282px;width:1px;height:12px;background:#a8a8a8"></div>
<svg class="a" style="left:740px;top:280px;" width="17" height="15" viewBox="0 0 17 15"><path d="M3.2 7.3 L6.8 10.8 L13.2 4.2" fill="none" stroke="#555" stroke-opacity="0.55" stroke-width="3.6" stroke-linecap="round" stroke-linejoin="round"/><path d="M2.3 6.3 L5.9 9.8 L12.3 3.2" fill="none" stroke="#27a21f" stroke-width="3.8" stroke-linecap="round" stroke-linejoin="round"/><path d="M2.3 6 L5.9 9.4 L12.3 2.9" fill="none" stroke="#4fc63c" stroke-width="1.6" stroke-linecap="round" stroke-linejoin="round"/></svg>
<div class="a t" style="left:758px;top:281px;font-size:12px;line-height:14px;color:#111;letter-spacing:-0.15px">Beim Verlinken schließen</div>
<div class="a" style="left:908px;top:282px;width:1px;height:12px;background:#a8a8a8"></div>
<div class="a t" style="left:924px;top:280px;font-size:12px;line-height:14px;color:#111;">Virtuelle Tastatur</div>
<div class="a" style="left:1028px;top:282px;width:1px;height:12px;background:#a8a8a8"></div>
<div class="a t" style="left:1044px;top:280px;font-size:12px;line-height:14px;color:#9a9a9a;letter-spacing:-0.35px">Datensätze : 1 / 12</div>
<div class="a" style="left:725px;top:300px;width:995px;height:668px;background:#f0f0f0;border-left:1px solid #80838c;border-top:1px solid #80838c;border-bottom:1px solid #80838c"></div>
<div class="a" style="left:726px;top:301px;width:994px;height:23px;background:#ece9da;border-bottom:2px solid #80838c"></div>
<div class="a" style="left:727px;top:303px;width:20px;height:19px;background:#dcdcdc;border:1px solid #b8b8b8"></div>
<div class="a" style="left:749px;top:303px;width:20px;height:19px;background:#dcdcdc;border:1px solid #b8b8b8"></div>
<div class="a" style="left:771px;top:303px;width:20px;height:19px;background:#dcdcdc;border:1px solid #b8b8b8"></div>
<div class="a" style="left:793px;top:303px;width:20px;height:19px;background:#dcdcdc;border:1px solid #b8b8b8"></div>
<svg class="a" style="left:729px;top:306px;" width="16" height="14" viewBox="0 0 16 14"><defs><linearGradient id="og" x1="0" x2="1"><stop offset="0" stop-color="#ffd060"/><stop offset="1" stop-color="#ff9a20"/></linearGradient></defs><rect x="0.5" y="0.5" width="15" height="13" fill="#fff" stroke="#6a6a72"/><rect x="1" y="9" width="14" height="4" fill="#e4e4ff"/><rect x="1" y="4.5" width="14" height="4.5" fill="url(#og)"/><rect x="5" y="1" width="1" height="12" fill="#9a9aa6"/><rect x="10" y="1" width="1" height="12" fill="#9a9aa6"/><rect x="1" y="4" width="14" height="1" fill="#b8b8c4"/><rect x="1" y="9" width="14" height="1" fill="#b8b8c4"/></svg>
<svg class="a" style="left:751px;top:305px;" width="16" height="16" viewBox="0 0 16 16"><path d="M1 4 L5 8 L1 12Z" fill="#3a8ad8"/><path d="M15 4 L11 8 L15 12Z" fill="#3a8ad8"/><rect x="6" y="2" width="4" height="12" fill="#fff" stroke="#666" stroke-width="0.8"/></svg>
<svg class="a" style="left:773px;top:304px;" width="16" height="16" viewBox="0 0 16 16"><ellipse cx="9.5" cy="3.5" rx="6" ry="2.5" fill="#e8e8e8" stroke="#666" stroke-width="0.8"/><path d="M3.5 3.5 Q8 9 8.5 9 L8.5 15 L10.5 13 L10.5 9 Q11 9 15.5 3.5" fill="#bbb" stroke="#666" stroke-width="0.8"/><path d="M1.5 10 L6 14.5 M6 10 L1.5 14.5" stroke="#e8341c" stroke-width="2"/></svg>
<svg class="a" style="left:795px;top:306px;" width="17" height="14" viewBox="0 0 17 14"><path d="M1 5.5 L6 2.5 L9.5 4 L13 3 L16 6.5 L15 10 L5 9 L1.5 8Z" fill="#cfcfcf" stroke="#4a4a4a" stroke-width="1" stroke-linejoin="round"/><circle cx="8.3" cy="8.6" r="2.6" fill="#c4e2ff" stroke="#4a4a4a" stroke-width="0.9"/><circle cx="13.4" cy="8.3" r="2.6" fill="#c4e2ff" stroke="#4a4a4a" stroke-width="0.9"/></svg>
<div class="a" style="left:1657px;top:303px;width:33px;height:19px;background:#cdcdd0;border:1px solid #b4b4b8"></div>
<div class="a" style="left:1692px;top:303px;width:28px;height:19px;background:#cdcdd0;border:1px solid #b4b4b8"></div>
<svg class="a" style="left:1657px;top:303px;" width="33" height="19" viewBox="0 0 33 19"><rect x="11" y="4" width="2" height="10" fill="#7b98bc"/><path d="M21 4 L13.5 9 L21 14Z" fill="#7b98bc"/></svg>
<svg class="a" style="left:1692px;top:303px;" width="28" height="19" viewBox="0 0 28 19"><path d="M19 4 L11.5 9 L19 14Z" fill="#7b98bc"/></svg>
<div class="a" style="left:738px;top:339px;width:348px;height:26px;background:#fff;border:2px solid #0a74d4"></div>
<div class="a" style="left:742px;top:344px;width:1px;height:15px;background:#111"></div>
<div class="a" style="left:1091px;top:338px;width:58px;height:27px;background:#e1e1e1;border:1px solid #adadad"></div>
<div class="a t" style="left:820px;width:600px;top:344px;font-size:12px;line-height:14px;color:#111;text-align:center;">Suchen</div>
<div class="a" style="left:1155px;top:338px;width:60px;height:27px;background:#e1e1e1;border:1px solid #adadad"></div>
<div class="a t" style="left:885px;width:600px;top:344px;font-size:12px;line-height:14px;color:#111;text-align:center;">Löschen</div>
<div class="a" style="left:726px;top:378px;width:994px;height:569px;background:#fff"></div>
<svg class="a" style="left:729px;top:384px;" width="8" height="11" viewBox="0 0 8 11"><rect x="0" y="0" width="1" height="1" fill="#222"/><rect x="2" y="0" width="5" height="1" fill="#222"/><rect x="0" y="2" width="1" height="1" fill="#222"/><rect x="2" y="2" width="5" height="1" fill="#222"/><rect x="0" y="4" width="1" height="1" fill="#222"/><rect x="2" y="4" width="5" height="1" fill="#222"/><rect x="0" y="6" width="1" height="1" fill="#222"/><rect x="2" y="6" width="5" height="1" fill="#222"/><rect x="0" y="8" width="1" height="1" fill="#222"/><rect x="2" y="8" width="5" height="1" fill="#222"/><rect x="0" y="10" width="1" height="1" fill="#222"/><rect x="2" y="10" width="5" height="1" fill="#222"/></svg>
<div class="a" style="left:738px;top:378px;width:119px;height:22px;overflow:hidden"><div class="t" style="position:absolute;left:21px;top:4px;font-size:12px;line-height:14px;color:#111">Bezeichnung</div></div>
<div class="a" style="left:857px;top:378px;width:1px;height:22px;background:#ececec"></div>
<div class="a" style="left:857px;top:378px;width:106px;height:22px;overflow:hidden"><div class="t" style="position:absolute;left:4px;top:4px;font-size:12px;line-height:14px;color:#111">Kurzbeschreibung</div></div>
<div class="a" style="left:963px;top:378px;width:1px;height:22px;background:#ececec"></div>
<div class="a" style="left:963px;top:378px;width:100px;height:22px;overflow:hidden"><div class="t" style="position:absolute;left:4px;top:4px;font-size:12px;line-height:14px;color:#111">Art des Zertifikats</div></div>
<div class="a" style="left:1063px;top:378px;width:1px;height:22px;background:#ececec"></div>
<div class="a" style="left:1063px;top:378px;width:180px;height:22px;overflow:hidden"><div class="t" style="position:absolute;left:4px;top:4px;font-size:12px;line-height:14px;color:#111">Untergruppe (Art des Zertifikats)</div></div>
<div class="a" style="left:1243px;top:378px;width:1px;height:22px;background:#ececec"></div>
<div class="a" style="left:1243px;top:378px;width:35px;height:22px;overflow:hidden"><div class="t" style="position:absolute;left:4px;top:4px;font-size:12px;line-height:14px;color:#111">Index</div></div>
<div class="a" style="left:1278px;top:378px;width:1px;height:22px;background:#ececec"></div>
<div class="a" style="left:1278px;top:378px;width:83px;height:22px;overflow:hidden"><div class="t" style="position:absolute;left:4px;top:4px;font-size:12px;line-height:14px;color:#111">Beschreibung</div></div>
<div class="a" style="left:1361px;top:378px;width:1px;height:22px;background:#ececec"></div>
<div class="a" style="left:1361px;top:378px;width:171px;height:22px;overflow:hidden"><div class="t" style="position:absolute;left:4px;top:4px;font-size:12px;line-height:14px;color:#111">kundenspezifisch 1 (normzert)</div></div>
<div class="a" style="left:1532px;top:378px;width:1px;height:22px;background:#ececec"></div>
<div class="a" style="left:1532px;top:378px;width:171px;height:22px;overflow:hidden"><div class="t" style="position:absolute;left:4px;top:4px;font-size:12px;line-height:14px;color:#111">kundenspezifisch 2 (normzert)</div></div>
<div class="a" style="left:1703px;top:378px;width:1px;height:22px;background:#ececec"></div>
<svg class="a" style="left:744px;top:383px;" width="9" height="11" viewBox="0 0 9 11"><path d="M0.5 0.5 L8.5 5.5 L0.5 10.5Z" fill="#1c7ee0"/></svg>
<svg class="a" style="left:1708px;top:383px;" width="10" height="11" viewBox="0 0 10 11"><path d="M0.5 0.5 L9.5 5.5 L0.5 10.5Z" fill="#1c7ee0"/></svg>
<div class="a" style="left:738px;top:400px;width:982px;height:21px;background:#fff"></div>
<div class="a" style="left:857px;top:400px;width:863px;height:20px;background:#0078d7;border-top:1px dotted #f0a040;border-bottom:1px dotted #f0a040"></div>
<div class="a" style="left:738px;top:400px;width:119px;height:20px;background:#fff;border:1px dotted #222;border-right:none"></div>
<div class="a" style="left:963px;top:401px;width:1px;height:18px;background:#e8eef6"></div>
<div class="a" style="left:1063px;top:401px;width:1px;height:18px;background:#e8eef6"></div>
<div class="a" style="left:1243px;top:401px;width:1px;height:18px;background:#e8eef6"></div>
<div class="a" style="left:1278px;top:401px;width:1px;height:18px;background:#e8eef6"></div>
<div class="a" style="left:1361px;top:401px;width:1px;height:18px;background:#e8eef6"></div>
<div class="a" style="left:1532px;top:401px;width:1px;height:18px;background:#e8eef6"></div>
<div class="a" style="left:1703px;top:401px;width:1px;height:18px;background:#e8eef6"></div>
<div class="a" style="left:738px;top:420px;width:982px;height:1px;background:#d9d9d9"></div>
<div class="a t" style="left:740px;top:403px;font-size:12px;line-height:14px;color:#111;"><span class="u">DIN EN 123456</span></div>
<div class="a t" style="left:966px;top:403px;font-size:12px;line-height:14px;color:#fff;">Norm</div>
<div class="a" style="left:738px;top:421px;width:982px;height:21px;background:#efefef"></div>
<div class="a" style="left:857px;top:421px;width:1px;height:21px;background:#d9d9d9"></div>
<div class="a" style="left:963px;top:421px;width:1px;height:21px;background:#d9d9d9"></div>
<div class="a" style="left:1063px;top:421px;width:1px;height:21px;background:#d9d9d9"></div>
<div class="a" style="left:1243px;top:421px;width:1px;height:21px;background:#d9d9d9"></div>
<div class="a" style="left:1278px;top:421px;width:1px;height:21px;background:#d9d9d9"></div>
<div class="a" style="left:1361px;top:421px;width:1px;height:21px;background:#d9d9d9"></div>
<div class="a" style="left:1532px;top:421px;width:1px;height:21px;background:#d9d9d9"></div>
<div class="a" style="left:1703px;top:421px;width:1px;height:21px;background:#d9d9d9"></div>
<div class="a" style="left:738px;top:441px;width:982px;height:1px;background:#d9d9d9"></div>
<div class="a t" style="left:740px;top:424px;font-size:12px;line-height:14px;color:#111;"><span class="u">BANF-Norm</span></div>
<div class="a t" style="left:966px;top:424px;font-size:12px;line-height:14px;color:#111;">Norm</div>
<div class="a" style="left:738px;top:442px;width:982px;height:21px;background:#fff"></div>
<div class="a" style="left:857px;top:442px;width:1px;height:21px;background:#d9d9d9"></div>
<div class="a" style="left:963px;top:442px;width:1px;height:21px;background:#d9d9d9"></div>
<div class="a" style="left:1063px;top:442px;width:1px;height:21px;background:#d9d9d9"></div>
<div class="a" style="left:1243px;top:442px;width:1px;height:21px;background:#d9d9d9"></div>
<div class="a" style="left:1278px;top:442px;width:1px;height:21px;background:#d9d9d9"></div>
<div class="a" style="left:1361px;top:442px;width:1px;height:21px;background:#d9d9d9"></div>
<div class="a" style="left:1532px;top:442px;width:1px;height:21px;background:#d9d9d9"></div>
<div class="a" style="left:1703px;top:442px;width:1px;height:21px;background:#d9d9d9"></div>
<div class="a" style="left:738px;top:462px;width:982px;height:1px;background:#d9d9d9"></div>
<div class="a t" style="left:740px;top:445px;font-size:12px;line-height:14px;color:#111;"><span class="u">SJC Normtest</span></div>
<div class="a t" style="left:966px;top:445px;font-size:12px;line-height:14px;color:#111;">Norm</div>
<div class="a" style="left:738px;top:463px;width:982px;height:21px;background:#efefef"></div>
<div class="a" style="left:857px;top:463px;width:1px;height:21px;background:#d9d9d9"></div>
<div class="a" style="left:963px;top:463px;width:1px;height:21px;background:#d9d9d9"></div>
<div class="a" style="left:1063px;top:463px;width:1px;height:21px;background:#d9d9d9"></div>
<div class="a" style="left:1243px;top:463px;width:1px;height:21px;background:#d9d9d9"></div>
<div class="a" style="left:1278px;top:463px;width:1px;height:21px;background:#d9d9d9"></div>
<div class="a" style="left:1361px;top:463px;width:1px;height:21px;background:#d9d9d9"></div>
<div class="a" style="left:1532px;top:463px;width:1px;height:21px;background:#d9d9d9"></div>
<div class="a" style="left:1703px;top:463px;width:1px;height:21px;background:#d9d9d9"></div>
<div class="a" style="left:738px;top:483px;width:982px;height:1px;background:#d9d9d9"></div>
<div class="a t" style="left:740px;top:466px;font-size:12px;line-height:14px;color:#111;"><span class="u">Foobar-Norm</span></div>
<div class="a t" style="left:966px;top:466px;font-size:12px;line-height:14px;color:#111;">Norm</div>
<div class="a" style="left:738px;top:484px;width:982px;height:21px;background:#fff"></div>
<div class="a" style="left:857px;top:484px;width:1px;height:21px;background:#d9d9d9"></div>
<div class="a" style="left:963px;top:484px;width:1px;height:21px;background:#d9d9d9"></div>
<div class="a" style="left:1063px;top:484px;width:1px;height:21px;background:#d9d9d9"></div>
<div class="a" style="left:1243px;top:484px;width:1px;height:21px;background:#d9d9d9"></div>
<div class="a" style="left:1278px;top:484px;width:1px;height:21px;background:#d9d9d9"></div>
<div class="a" style="left:1361px;top:484px;width:1px;height:21px;background:#d9d9d9"></div>
<div class="a" style="left:1532px;top:484px;width:1px;height:21px;background:#d9d9d9"></div>
<div class="a" style="left:1703px;top:484px;width:1px;height:21px;background:#d9d9d9"></div>
<div class="a" style="left:738px;top:504px;width:982px;height:1px;background:#d9d9d9"></div>
<div class="a t" style="left:740px;top:487px;font-size:12px;line-height:14px;color:#111;"><span class="u">NORMANNENNORM</span></div>
<div class="a t" style="left:966px;top:487px;font-size:12px;line-height:14px;color:#111;">Umweltnorm</div>
<div class="a t" style="left:1247px;top:487px;font-size:12px;line-height:14px;color:#111;">1</div>
<div class="a" style="left:738px;top:505px;width:982px;height:21px;background:#efefef"></div>
<div class="a" style="left:857px;top:505px;width:1px;height:21px;background:#d9d9d9"></div>
<div class="a" style="left:963px;top:505px;width:1px;height:21px;background:#d9d9d9"></div>
<div class="a" style="left:1063px;top:505px;width:1px;height:21px;background:#d9d9d9"></div>
<div class="a" style="left:1243px;top:505px;width:1px;height:21px;background:#d9d9d9"></div>
<div class="a" style="left:1278px;top:505px;width:1px;height:21px;background:#d9d9d9"></div>
<div class="a" style="left:1361px;top:505px;width:1px;height:21px;background:#d9d9d9"></div>
<div class="a" style="left:1532px;top:505px;width:1px;height:21px;background:#d9d9d9"></div>
<div class="a" style="left:1703px;top:505px;width:1px;height:21px;background:#d9d9d9"></div>
<div class="a" style="left:738px;top:525px;width:982px;height:1px;background:#d9d9d9"></div>
<div class="a t" style="left:740px;top:508px;font-size:12px;line-height:14px;color:#111;"><span class="u">Normannennorm</span></div>
<div class="a t" style="left:966px;top:508px;font-size:12px;line-height:14px;color:#111;">Umweltnorm</div>
<div class="a" style="left:738px;top:526px;width:982px;height:21px;background:#fff"></div>
<div class="a" style="left:857px;top:526px;width:1px;height:21px;background:#d9d9d9"></div>
<div class="a" style="left:963px;top:526px;width:1px;height:21px;background:#d9d9d9"></div>
<div class="a" style="left:1063px;top:526px;width:1px;height:21px;background:#d9d9d9"></div>
<div class="a" style="left:1243px;top:526px;width:1px;height:21px;background:#d9d9d9"></div>
<div class="a" style="left:1278px;top:526px;width:1px;height:21px;background:#d9d9d9"></div>
<div class="a" style="left:1361px;top:526px;width:1px;height:21px;background:#d9d9d9"></div>
<div class="a" style="left:1532px;top:526px;width:1px;height:21px;background:#d9d9d9"></div>
<div class="a" style="left:1703px;top:526px;width:1px;height:21px;background:#d9d9d9"></div>
<div class="a" style="left:738px;top:546px;width:982px;height:1px;background:#d9d9d9"></div>
<div class="a t" style="left:740px;top:529px;font-size:12px;line-height:14px;color:#111;"><span class="u">Lieferantenaudit</span></div>
<div class="a t" style="left:966px;top:529px;font-size:12px;line-height:14px;color:#111;">Audit</div>
<div class="a" style="left:738px;top:547px;width:982px;height:21px;background:#efefef"></div>
<div class="a" style="left:857px;top:547px;width:1px;height:21px;background:#d9d9d9"></div>
<div class="a" style="left:963px;top:547px;width:1px;height:21px;background:#d9d9d9"></div>
<div class="a" style="left:1063px;top:547px;width:1px;height:21px;background:#d9d9d9"></div>
<div class="a" style="left:1243px;top:547px;width:1px;height:21px;background:#d9d9d9"></div>
<div class="a" style="left:1278px;top:547px;width:1px;height:21px;background:#d9d9d9"></div>
<div class="a" style="left:1361px;top:547px;width:1px;height:21px;background:#d9d9d9"></div>
<div class="a" style="left:1532px;top:547px;width:1px;height:21px;background:#d9d9d9"></div>
<div class="a" style="left:1703px;top:547px;width:1px;height:21px;background:#d9d9d9"></div>
<div class="a" style="left:738px;top:567px;width:982px;height:1px;background:#d9d9d9"></div>
<div class="a t" style="left:740px;top:550px;font-size:12px;line-height:14px;color:#111;"><span class="u">AWV.Norm</span></div>
<div class="a t" style="left:966px;top:550px;font-size:12px;line-height:14px;color:#111;">Fertigungsnorm</div>
<div class="a" style="left:738px;top:568px;width:982px;height:21px;background:#fff"></div>
<div class="a" style="left:857px;top:568px;width:1px;height:21px;background:#d9d9d9"></div>
<div class="a" style="left:963px;top:568px;width:1px;height:21px;background:#d9d9d9"></div>
<div class="a" style="left:1063px;top:568px;width:1px;height:21px;background:#d9d9d9"></div>
<div class="a" style="left:1243px;top:568px;width:1px;height:21px;background:#d9d9d9"></div>
<div class="a" style="left:1278px;top:568px;width:1px;height:21px;background:#d9d9d9"></div>
<div class="a" style="left:1361px;top:568px;width:1px;height:21px;background:#d9d9d9"></div>
<div class="a" style="left:1532px;top:568px;width:1px;height:21px;background:#d9d9d9"></div>
<div class="a" style="left:1703px;top:568px;width:1px;height:21px;background:#d9d9d9"></div>
<div class="a" style="left:738px;top:588px;width:982px;height:1px;background:#d9d9d9"></div>
<div class="a t" style="left:740px;top:571px;font-size:12px;line-height:14px;color:#111;"><span class="u">ISO0815</span></div>
<div class="a t" style="left:966px;top:571px;font-size:12px;line-height:14px;color:#111;">Fertigungsnorm</div>
<div class="a" style="left:738px;top:589px;width:982px;height:21px;background:#efefef"></div>
<div class="a" style="left:857px;top:589px;width:1px;height:21px;background:#d9d9d9"></div>
<div class="a" style="left:963px;top:589px;width:1px;height:21px;background:#d9d9d9"></div>
<div class="a" style="left:1063px;top:589px;width:1px;height:21px;background:#d9d9d9"></div>
<div class="a" style="left:1243px;top:589px;width:1px;height:21px;background:#d9d9d9"></div>
<div class="a" style="left:1278px;top:589px;width:1px;height:21px;background:#d9d9d9"></div>
<div class="a" style="left:1361px;top:589px;width:1px;height:21px;background:#d9d9d9"></div>
<div class="a" style="left:1532px;top:589px;width:1px;height:21px;background:#d9d9d9"></div>
<div class="a" style="left:1703px;top:589px;width:1px;height:21px;background:#d9d9d9"></div>
<div class="a" style="left:738px;top:609px;width:982px;height:1px;background:#d9d9d9"></div>
<div class="a t" style="left:740px;top:592px;font-size:12px;line-height:14px;color:#111;"><span class="u">ISO14001</span></div>
<div class="a t" style="left:966px;top:592px;font-size:12px;line-height:14px;color:#111;">Umweltnorm</div>
<div class="a" style="left:738px;top:610px;width:982px;height:21px;background:#fff"></div>
<div class="a" style="left:857px;top:610px;width:1px;height:21px;background:#d9d9d9"></div>
<div class="a" style="left:963px;top:610px;width:1px;height:21px;background:#d9d9d9"></div>
<div class="a" style="left:1063px;top:610px;width:1px;height:21px;background:#d9d9d9"></div>
<div class="a" style="left:1243px;top:610px;width:1px;height:21px;background:#d9d9d9"></div>
<div class="a" style="left:1278px;top:610px;width:1px;height:21px;background:#d9d9d9"></div>
<div class="a" style="left:1361px;top:610px;width:1px;height:21px;background:#d9d9d9"></div>
<div class="a" style="left:1532px;top:610px;width:1px;height:21px;background:#d9d9d9"></div>
<div class="a" style="left:1703px;top:610px;width:1px;height:21px;background:#d9d9d9"></div>
<div class="a" style="left:738px;top:630px;width:982px;height:1px;background:#d9d9d9"></div>
<div class="a t" style="left:740px;top:613px;font-size:12px;line-height:14px;color:#111;"><span class="u">EN9100</span></div>
<div class="a t" style="left:966px;top:613px;font-size:12px;line-height:14px;color:#111;">Fertigungsnorm</div>
<div class="a t" style="left:1364px;top:613px;font-size:12px;line-height:14px;color:#111;">056165</div>
<div class="a t" style="left:1535px;top:613px;font-size:12px;line-height:14px;color:#111;">546565</div>
<div class="a t" style="left:1706px;top:613px;font-size:12px;line-height:14px;color:#111;"><span class="u">ST</span></div>
<div class="a" style="left:738px;top:631px;width:982px;height:21px;background:#efefef"></div>
<div class="a" style="left:857px;top:631px;width:1px;height:21px;background:#d9d9d9"></div>
<div class="a" style="left:963px;top:631px;width:1px;height:21px;background:#d9d9d9"></div>
<div class="a" style="left:1063px;top:631px;width:1px;height:21px;background:#d9d9d9"></div>
<div class="a" style="left:1243px;top:631px;width:1px;height:21px;background:#d9d9d9"></div>
<div class="a" style="left:1278px;top:631px;width:1px;height:21px;background:#d9d9d9"></div>
<div class="a" style="left:1361px;top:631px;width:1px;height:21px;background:#d9d9d9"></div>
<div class="a" style="left:1532px;top:631px;width:1px;height:21px;background:#d9d9d9"></div>
<div class="a" style="left:1703px;top:631px;width:1px;height:21px;background:#d9d9d9"></div>
<div class="a" style="left:738px;top:651px;width:982px;height:1px;background:#d9d9d9"></div>
<div class="a t" style="left:740px;top:634px;font-size:12px;line-height:14px;color:#111;"><span class="u">ISO Goldhamster</span></div>
<div class="a t" style="left:966px;top:634px;font-size:12px;line-height:14px;color:#111;">Norm</div>
<div class="a" style="left:738px;top:420px;width:1px;height:231px;background:#d9d9d9"></div>
<svg class="a" style="left:730px;top:405px;" width="6" height="10" viewBox="0 0 6 10"><path d="M0.5 0.5 L5.5 5 L0.5 9.5Z" fill="#111"/></svg>
<div class="a" style="left:726px;top:963px;width:994px;height:4px;background:#fff;border-top:1px solid #80838c;border-bottom:1px solid #80838c"></div>
<div class="a" style="left:726px;top:947px;width:994px;height:16px;background:#e9e9e9"></div>
<div class="a" style="left:742px;top:947px;width:914px;height:16px;background:#a9a9a9"></div>
<svg class="a" style="left:726px;top:947px;" width="16" height="17" viewBox="0 0 16 17"><path d="M10 4.5 L6 8.5 L10 12.5" fill="none" stroke="#777" stroke-width="1"/></svg>
<div class="a" style="left:722px;top:970px;width:115px;height:28px;background:linear-gradient(#f8c27a 0%,#fbb060 25%,#f99744 45%,#f99a46 70%,#fbc074 100%);border:1px solid #c98c44;border-radius:3px"></div>
<svg class="a" style="left:761px;top:975px;" width="17" height="15" viewBox="0 0 17 15"><path d="M3.2 7.3 L6.8 10.8 L13.2 4.2" fill="none" stroke="#555" stroke-opacity="0.55" stroke-width="3.6" stroke-linecap="round" stroke-linejoin="round"/><path d="M2.3 6.3 L5.9 9.8 L12.3 3.2" fill="none" stroke="#27a21f" stroke-width="3.8" stroke-linecap="round" stroke-linejoin="round"/><path d="M2.3 6 L5.9 9.4 L12.3 2.9" fill="none" stroke="#4fc63c" stroke-width="1.6" stroke-linecap="round" stroke-linejoin="round"/></svg>
<div class="a t" style="left:783px;top:976px;font-size:12px;line-height:14px;color:#111;"><span class="u">O</span>k</div>
<div class="a" style="left:838px;top:970px;width:114px;height:28px;background:linear-gradient(#ffffff 0%,#f4f6f8 30%,#d9e0e8 55%,#e8edf2 100%);border:1px solid #a4adb8;border-radius:3px"></div>
<svg class="a" style="left:856px;top:975px;" width="17" height="17" viewBox="0 0 17 17"><path d="M2 4 L5 1 L8.5 5.5 L12 1 L15 4 L11 8.5 L15 13 L12 16 L8.5 11.5 L5 16 L2 13 L6 8.5Z" fill="#f03a22" stroke="#b82010" stroke-width="0.6"/></svg>
<div class="a t" style="left:877px;top:976px;font-size:12px;line-height:14px;color:#111;"><span class="u">A</span>bbrechen</div>
<div class="a" style="left:27px;top:1019px;width:1693px;height:21px;background:#f0f0f0"></div>
<div class="a" style="left:0px;top:1039px;width:1720px;height:1px;background:#fff"></div>
<div class="a" style="left:26px;top:1022px;width:63px;height:17px;border-top:1px solid #a4a4a4;border-left:1px solid #a4a4a4;border-right:1px solid #fcfcfc"></div>
<div class="a" style="left:91px;top:1022px;width:178px;height:17px;border-top:1px solid #a4a4a4;border-left:1px solid #a4a4a4;border-right:1px solid #fcfcfc"></div>
<div class="a" style="left:271px;top:1022px;width:80px;height:17px;border-top:1px solid #a4a4a4;border-left:1px solid #a4a4a4;border-right:1px solid #fcfcfc"></div>
<div class="a" style="left:353px;top:1022px;width:177px;height:17px;border-top:1px solid #a4a4a4;border-left:1px solid #a4a4a4;border-right:1px solid #fcfcfc"></div>
<div class="a" style="left:532px;top:1022px;width:103px;height:17px;border-top:1px solid #a4a4a4;border-left:1px solid #a4a4a4;border-right:1px solid #fcfcfc"></div>
<div class="a" style="left:727px;top:1022px;width:77px;height:17px;border-top:1px solid #a4a4a4;border-left:1px solid #a4a4a4;border-right:1px solid #fcfcfc"></div>
<div class="a" style="left:806px;top:1022px;width:97px;height:17px;border-top:1px solid #a4a4a4;border-left:1px solid #a4a4a4;border-right:1px solid #fcfcfc"></div>
<div class="a" style="left:905px;top:1022px;width:102px;height:17px;border-top:1px solid #a4a4a4;border-left:1px solid #a4a4a4;border-right:1px solid #fcfcfc"></div>
<div class="a" style="left:1009px;top:1022px;width:104px;height:17px;border-top:1px solid #a4a4a4;border-left:1px solid #a4a4a4;border-right:1px solid #fcfcfc"></div>
<div class="a" style="left:1116px;top:1022px;width:603px;height:17px;border-top:1px solid #a4a4a4;border-left:1px solid #a4a4a4;border-right:1px solid #fcfcfc"></div>
<div class="a t" style="right:1637px;top:1024px;font-size:12px;line-height:14px;color:#111;text-align:right;letter-spacing:-0.7px">Erstellt:</div>
<div class="a t" style="left:94px;top:1024px;font-size:12px;line-height:14px;color:#111;letter-spacing:-0.18px">2025-06-06&nbsp; Max Mustermann</div>
<div class="a t" style="left:283px;top:1025px;font-size:12px;line-height:14px;color:#0000e0;"><span class="u">Bearbeitet:</span></div>
<div class="a t" style="left:356px;top:1024px;font-size:12px;line-height:14px;color:#111;letter-spacing:-0.15px">2025-07-07&nbsp; Steffen Angrick</div>
<div class="a t" style="right:1090px;top:1024px;font-size:12px;line-height:14px;color:#111;text-align:right;">Wiedervorlage:</div>
<div class="a" style="left:639px;top:1024px;width:83px;height:14px;background:linear-gradient(#fafbfc,#e6eaef);border:1px solid #9ba4ae;border-radius:2px"></div>
<div class="a t" style="left:381px;width:600px;top:1025px;font-size:11px;line-height:13px;color:#111;text-align:center;">**</div>
<div class="a" style="left:677px;top:1036px;width:8px;height:1px;background:#111"></div>
<div class="a t" style="left:466px;width:600px;top:1025px;font-size:12px;line-height:14px;color:#0000e0;text-align:center;"><span class="u">Dokument</span></div>
<div class="a t" style="left:554px;width:600px;top:1025px;font-size:12px;line-height:14px;color:#0000e0;text-align:center;"><span class="u">Notizen</span></div>
<div class="a t" style="left:656px;width:600px;top:1025px;font-size:12px;line-height:14px;color:#0000e0;text-align:center;"><span class="u">Eigenschaften</span></div>
<div class="a t" style="left:760px;width:600px;top:1025px;font-size:12px;line-height:14px;color:#ee0000;text-align:center;"><span class="u">Softlink</span></div>
<div class="a" style="left:0px;top:1040px;width:1720px;height:40px;background:#111"></div>
<div class="a" style="left:0px;top:1052px;width:2px;height:16px;background:#f4dc88"></div>
<div class="a" style="left:114px;top:1040px;width:48px;height:40px;background:#2d2d2d"></div>
<div class="a" style="left:20px;top:1078px;width:40px;height:2px;background:#76b9ed"></div>
<div class="a" style="left:114px;top:1078px;width:48px;height:2px;background:#76b9ed"></div>
<svg class="a" style="left:28px;top:1047px;" width="24" height="25" viewBox="0 0 24 25"><defs><radialGradient id="ff" cx="50%" cy="80%" r="75%"><stop offset="0" stop-color="#ff3a6a"/><stop offset="0.45" stop-color="#ff7a18"/><stop offset="1" stop-color="#ffd23a"/></radialGradient><radialGradient id="fp" cx="40%" cy="60%" r="60%"><stop offset="0" stop-color="#5b5ff0"/><stop offset="1" stop-color="#9a2ac8"/></radialGradient></defs>
<path d="M12 24 C4 24 0.5 17.5 1.5 12 C2 9 3.5 6.5 4.5 5.5 C4.5 8 5.5 9.5 6.5 10 C7.5 6.5 10.5 4 13.5 3.5 C13.5 2 13.5 1 14.5 0.5 C18 2.5 21.5 6.5 22.5 11 C23.5 18 19 24 12 24Z" fill="url(#ff)"/>
<circle cx="12.5" cy="13.5" r="5.2" fill="url(#fp)"/>
<path d="M7 9.5 C9 8 12 7.5 14.5 8.5 C13 9.5 12 10 11 10.5Z" fill="#ffb020"/></svg>
<svg class="a" style="left:77px;top:1048px;" width="24" height="24" viewBox="0 0 24 24"><path d="M9.5 7 H22.5 V19 H9.5Z" fill="#fff"/><path d="M10 9 L16 13.5 L22 9 V7.5 L16 12 L10 7.5Z" fill="#0a64b4"/><path d="M1 3.5 L13 0.5 L13 23.5 L1 20.5Z" fill="#0a6ac0"/><ellipse cx="7" cy="12" rx="3" ry="3.8" fill="none" stroke="#fff" stroke-width="1.8"/></svg>
<svg class="a" style="left:126px;top:1050px;" width="25" height="20" viewBox="0 0 25 20"><rect x="0.5" y="0.5" width="23.7" height="18.5" rx="3.5" fill="#2a9ad6"/>
<rect x="0.5" y="0.5" width="4" height="18.5" rx="2" fill="#1a78b0"/>
<path d="M6.3 3 L10.1 3 Q13.8 6.3 17.1 9.9 Q13.8 13.5 10.1 16.9 L6.3 16.9Z" fill="#fff"/>
<path d="M15.7 3 L22 3 L22 16.9 L15.7 16.9 Q17.8 13.3 19.9 9.9 Q17.8 6.5 15.7 3Z" fill="#fff"/></svg>
<div class="a" style="left:1475px;top:1052px;width:1px;height:16px;background:#555"></div>
<div class="a" style="left:1478px;top:1052px;width:1px;height:16px;background:#555"></div>
<div class="a t" style="left:1489px;top:1052px;font-size:12px;line-height:16px;color:#e8e8e8;">Desktop</div>
<svg class="a" style="left:1539px;top:1045px;" width="10" height="7" viewBox="0 0 10 7"><path d="M1 1 L4 3.5 L1 6 M5 1 L8 3.5 L5 6" fill="none" stroke="#fff" stroke-width="1.3"/></svg>
<svg class="a" style="left:1558px;top:1054px;" width="14" height="9" viewBox="0 0 14 9"><path d="M1 8 L7 2 L13 8" fill="none" stroke="#fff" stroke-width="1.3"/></svg>
<svg class="a" style="left:1580px;top:1053px;" width="18" height="15" viewBox="0 0 18 15"><rect x="3.5" y="2.5" width="14" height="9" fill="none" stroke="#fff"/><rect x="1.5" y="1.5" width="4" height="3" fill="#111" stroke="#fff" stroke-width="0.8"/><path d="M10 12 V14 M6 14.5 H14" stroke="#fff"/></svg>
<div class="a t" style="left:1334px;width:600px;top:1043px;font-size:12px;line-height:14px;color:#fff;text-align:center;letter-spacing:-0.6px">11:43</div>
<div class="a t" style="left:1334px;width:600px;top:1061px;font-size:12px;line-height:14px;color:#fff;text-align:center;letter-spacing:-0.7px">18.09.2025</div>
<svg class="a" style="left:1679px;top:1052px;" width="18" height="17" viewBox="0 0 18 17"><path d="M1 1 H17 V13 H7 L4 16 V13 H1Z" fill="#fff"/><path d="M4 4H14M4 7H14M4 10H11" stroke="#111"/><circle cx="14" cy="13" r="3" fill="#fff" stroke="#111" stroke-width="0.8"/></svg>
<div class="a" style="left:1716px;top:1040px;width:1px;height:40px;background:#555"></div>
</body></html>
